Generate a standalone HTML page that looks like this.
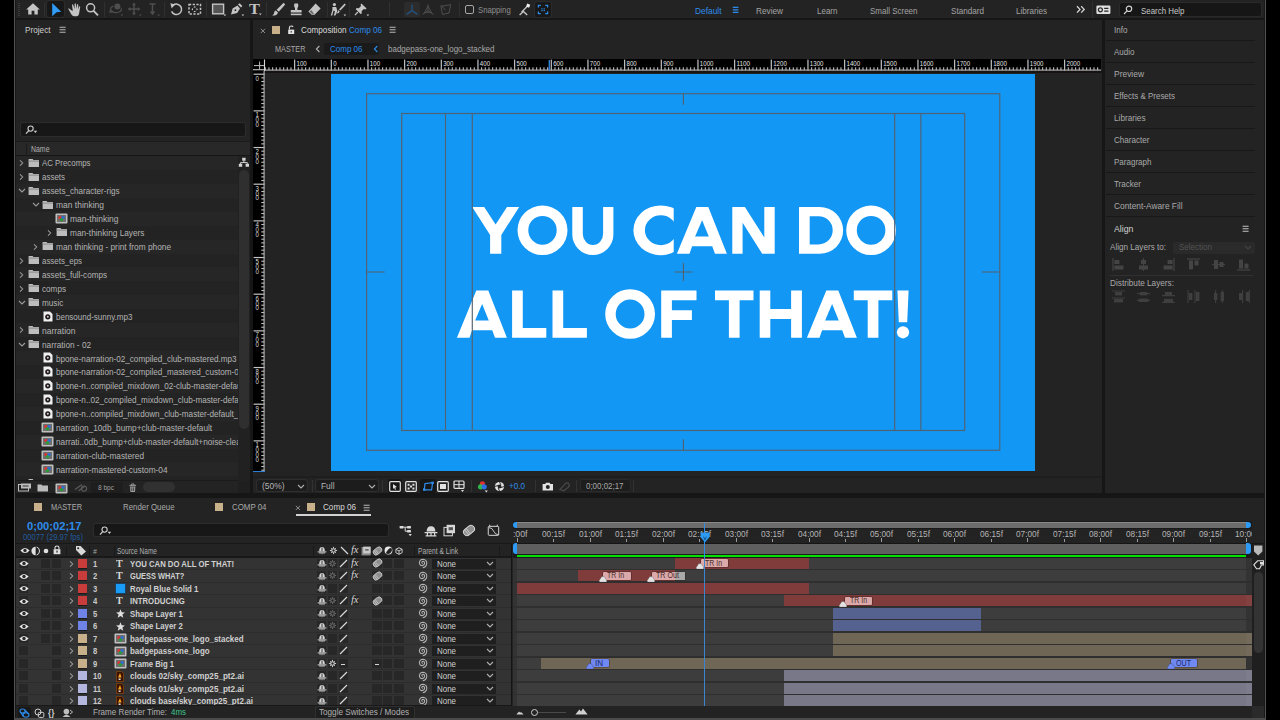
<!DOCTYPE html><html><head><meta charset="utf-8"><title>AE</title><style>html,body{margin:0;padding:0;background:#232323;}body{width:1280px;height:720px;position:relative;overflow:hidden;font-family:"Liberation Sans",sans-serif;}div,span,svg{position:absolute;display:block;}span{white-space:nowrap;}</style></head><body><div style="left:0px;top:0px;width:14px;height:720px;background:#000;"></div>
<div style="left:14px;top:0px;width:1px;height:720px;background:#4b4b4b;"></div>
<div style="left:1265px;top:0px;width:1px;height:720px;background:#4b4b4b;"></div>
<div style="left:1266px;top:0px;width:14px;height:720px;background:#000;"></div>
<div style="left:14px;top:718px;width:1252px;height:2px;background:#4b4b4b;"></div>
<div style="left:15px;top:0px;width:1250px;height:18px;background:#232323;"></div>
<div style="left:15px;top:18px;width:1250px;height:2px;background:#161616;"></div>
<div style="left:44px;top:2px;width:1px;height:15px;background:#303030;"></div>
<div style="left:104px;top:2px;width:1px;height:15px;background:#303030;"></div>
<div style="left:164px;top:2px;width:1px;height:15px;background:#303030;"></div>
<div style="left:206px;top:2px;width:1px;height:15px;background:#303030;"></div>
<div style="left:266px;top:2px;width:1px;height:15px;background:#303030;"></div>
<div style="left:327px;top:2px;width:1px;height:15px;background:#303030;"></div>
<div style="left:349px;top:2px;width:1px;height:15px;background:#303030;"></div>
<div style="left:388.5px;top:2px;width:1px;height:15px;background:#303030;"></div>
<div style="left:459px;top:2px;width:1px;height:15px;background:#303030;"></div>
<div style="left:18px;top:3px;width:2px;height:13px;background:repeating-linear-gradient(#3a3a3a 0 1px,#232323 1px 2px)"></div>
<svg style="left:25px;top:2px;" width="16" height="14" viewBox="0 0 16 14"><path d="M8 1.2 L1.2 7.6 H3.2 V12.6 H6.6 V8.8 H9.4 V12.6 H12.8 V7.6 H14.8 Z" fill="#c4c4c4"/></svg>
<div style="left:47px;top:1px;width:17px;height:16px;background:#181818;border-radius:2px;box-shadow:0 0 0 1px #2c2c2c;"></div>
<svg style="left:51px;top:2px;" width="12" height="15" viewBox="0 0 12 15"><path d="M1.2 1 L10.2 9.8 L5.6 10.2 L1.2 14.2 Z" fill="#2f9bf4"/></svg>
<svg style="left:67px;top:2px;" width="15" height="15" viewBox="0 0 15 15"><path d="M4 8 L2.2 6.4 Q1 5.6 1.6 7.4 L4.4 12.6 Q5.4 14.2 7.4 14.2 H9.4 Q11.6 14.2 12 12 L13.2 5 Q13.2 3.8 12.2 4.4 L11.4 7.4 L11.2 2.6 Q10.6 1.4 10 2.6 L9.6 7 L8.8 1.8 Q8.2 0.6 7.6 1.8 L7.6 7 L6.2 2.8 Q5.4 1.8 5 3 L5.8 9 Z" fill="#c4c4c4"/></svg>
<svg style="left:85px;top:2px;" width="15" height="15" viewBox="0 0 15 15"><circle cx="5.6" cy="5.8" r="4" fill="none" stroke="#c4c4c4" stroke-width="1.5"/><path d="M8.6 8.8 L13 13.4" stroke="#c4c4c4" stroke-width="1.9"/></svg>
<svg style="left:108px;top:2px;" width="16" height="15" viewBox="0 0 16 15"><circle cx="9.4" cy="4.6" r="3" fill="#4e4e4e"/><path d="M5.4 4.2 Q1.4 5.6 3.2 8.6 Q6 11.6 11 10 Q14.4 8.6 13 6.4" fill="none" stroke="#4e4e4e" stroke-width="1.3"/><path d="M2 7 L4.6 10.6 L1.2 10.8 Z" fill="#4e4e4e"/><path d="M12.6 12.4 l2.6 0 l-1.3 1.8z" fill="#4e4e4e"/></svg>
<svg style="left:128px;top:2px;" width="14" height="15" viewBox="0 0 14 15"><path d="M6 2.4 V11.6 M1.4 7 H10.6" stroke="#4e4e4e" stroke-width="1.5" fill="none"/><path d="M6 0.6 L8 3.2 H4 Z M6 13.4 L8 10.8 H4 Z M-0.4 7 L2.2 5 V9 Z M12.4 7 L9.8 5 V9 Z" fill="#4e4e4e"/><path d="M11 12.4 l2.6 0 l-1.3 1.8z" fill="#4e4e4e"/></svg>
<svg style="left:147px;top:2px;" width="14" height="15" viewBox="0 0 14 15"><path d="M5.5 2 V10.6 M2.4 2 H8.6" stroke="#4e4e4e" stroke-width="1.5" fill="none"/><path d="M5.5 13.2 L8.4 9.4 H2.6 Z" fill="#4e4e4e"/><path d="M10.4 12.4 l2.6 0 l-1.3 1.8z" fill="#4e4e4e"/></svg>
<svg style="left:169px;top:2px;" width="15" height="15" viewBox="0 0 15 15"><path d="M4.2 3.2 A5.2 5.2 0 1 1 2.6 9.4" fill="none" stroke="#c4c4c4" stroke-width="1.5"/><path d="M1.4 1.2 L6.4 2.6 L2.6 6.2 Z" fill="#c4c4c4"/></svg>
<svg style="left:187px;top:2px;" width="16" height="15" viewBox="0 0 16 15"><rect x="2" y="2.5" width="11.5" height="9.5" fill="none" stroke="#c4c4c4" stroke-width="1.5" stroke-dasharray="2.2 1.5"/><path d="M7.7 4 L9 5.6 H6.4 Z M7.7 10.6 L9 9 H6.4 Z M4.4 7.3 L6 6 V8.6 Z M11 7.3 L9.4 6 V8.6 Z" fill="#c4c4c4"/></svg>
<svg style="left:211px;top:2px;" width="16" height="15" viewBox="0 0 16 15"><rect x="1.6" y="2.2" width="11" height="9.6" fill="#555" stroke="#c4c4c4" stroke-width="1.4"/><path d="M12.6 12.4 l2.6 0 l-1.3 1.8z" fill="#c4c4c4"/></svg>
<svg style="left:229px;top:2px;" width="16" height="15" viewBox="0 0 16 15"><path d="M2 12.6 L3.6 6.4 L8.4 3.6 L11 6.4 L8.2 11 Z" fill="#c4c4c4"/><path d="M9 2.6 L10.6 1.2 L13.4 4 L12 5.6 Z" fill="#c4c4c4"/><circle cx="6.4" cy="8.2" r="0.9" fill="#232323"/><path d="M12.6 12.4 l2.6 0 l-1.3 1.8z" fill="#c4c4c4"/></svg>
<span style="left:248.50px;top:3.15px;font-size:14px;line-height:14px;color:#c4c4c4;transform:scaleX(1.1693);transform-origin:left top;font-family:'Liberation Serif',serif;font-weight:bold;opacity:.99;">T</span>
<svg style="left:259px;top:13px;" width="4" height="3" viewBox="0 0 4 3"><path d="M0 0.4 l2.6 0 l-1.3 1.8z" fill="#c4c4c4"/></svg>
<svg style="left:271px;top:2px;" width="15" height="15" viewBox="0 0 15 15"><path d="M12.6 0.8 L14.2 2.4 L7.8 9.8 L5.6 7.8 Z" fill="#c4c4c4"/><path d="M4.8 8.4 L7 10.4 Q6 13.8 1.2 13.6 Q3.4 12.2 3.2 10.2 Q3.6 8.6 4.8 8.4Z" fill="#c4c4c4"/></svg>
<svg style="left:289px;top:2px;" width="15" height="15" viewBox="0 0 15 15"><path d="M5.4 1.4 H9 Q10 4 8.4 6.2 V8 H12.6 V10.4 H1.8 V8 H6 V6.2 Q4.4 4 5.4 1.4Z" fill="#c4c4c4"/><rect x="1.8" y="11.6" width="10.8" height="1.6" fill="#c4c4c4"/></svg>
<svg style="left:307px;top:2px;" width="15" height="15" viewBox="0 0 15 15"><path d="M8.6 1.6 L13.6 6.6 L7.6 12.8 H4.6 L1.4 9.4 Z" fill="#c4c4c4"/><path d="M2.6 9.6 L5 12 H7 L4.4 8 Z" fill="#232323" opacity=".55"/></svg>
<svg style="left:330px;top:2px;" width="17" height="15" viewBox="0 0 17 15"><circle cx="4.4" cy="2.6" r="1.6" fill="#c4c4c4"/><path d="M2.4 5 H6.2 L7.4 9 L5.4 13.6 H3.8 L5 9.4 L3.6 8.6 L2.2 13.6 H0.8 L2.4 8 Z" fill="#c4c4c4"/><path d="M14.6 1.6 L15.8 2.8 L10.4 8.6 L9 7.4 Z" fill="#c4c4c4"/><path d="M8.4 8 L9.8 9.4 Q9 11.6 6.4 11.4 Q8 10.4 8.4 8Z" fill="#c4c4c4"/><path d="M13.6 12.4 l2.6 0 l-1.3 1.8z" fill="#c4c4c4"/></svg>
<svg style="left:354px;top:2px;" width="16" height="15" viewBox="0 0 16 15"><path d="M7.4 1.4 L12.6 6.6 L11.2 7.4 L9.8 7 L7.6 9.2 L7.8 11.4 L6.6 12 L1.8 7.2 L2.6 6 L4.8 6.2 L7 4 L6.6 2.6 Z" fill="#c4c4c4"/><path d="M3.8 10 L1 13.2" stroke="#c4c4c4" stroke-width="1.2"/><path d="M12.6 12.4 l2.6 0 l-1.3 1.8z" fill="#c4c4c4"/></svg>
<div style="left:404px;top:2px;width:16px;height:15px;background:#2c2c2c;border-radius:2px;"></div>
<svg style="left:405px;top:3px;" width="14" height="13" viewBox="0 0 14 13"><path d="M7 1.4 V7.6 L1.6 11.4 M7 7.6 L12.4 11.4" stroke="#23527e" stroke-width="1.3" fill="none"/></svg>
<svg style="left:421px;top:3px;" width="14" height="13" viewBox="0 0 14 13"><path d="M7 1.4 V7.6 L1.6 11.4 M7 7.6 L12.4 11.4" stroke="#4e4e4e" stroke-width="1.1" fill="none"/><path d="M7 3 L3.4 9.6 H10.6 Z" stroke="#4e4e4e" stroke-width=".9" fill="none"/></svg>
<svg style="left:439px;top:3px;" width="14" height="13" viewBox="0 0 14 13"><path d="M2 3.4 L11.6 1.6 L10 10 L3.4 11.4 Z" stroke="#4e4e4e" stroke-width="1" fill="none"/><path d="M1.6 1.8 L6.6 7.2" stroke="#4e4e4e" stroke-width="1"/></svg>
<div style="left:465.2px;top:5px;width:7.2px;height:7.4px;border:1.6px solid #a6a6a6;border-radius:2px"></div>
<span style="left:478.30px;top:6.38px;font-size:9px;line-height:9px;color:#8e8e8e;transform:scaleX(0.8597);transform-origin:left top;">Snapping</span>
<svg style="left:518px;top:3px;" width="14" height="13" viewBox="0 0 14 13"><path d="M3.6 9 L9.6 3" stroke="#c4c4c4" stroke-width="1.3"/><rect x="8.6" y="1" width="3.2" height="3.2" fill="#f0f0f0" transform="rotate(20 10 2.6)"/><path d="M1.6 12 L5.4 8.4 L9.2 12" stroke="#c4c4c4" stroke-width="1.4" fill="none"/></svg>
<div style="left:535px;top:2px;width:15.5px;height:15px;background:#181818;border-radius:2px;box-shadow:0 0 0 1px #2b2b2b;"></div>
<svg style="left:536px;top:3px;" width="14" height="13" viewBox="0 0 14 13"><path d="M2.4 4.6 V2.4 H4.8 M9.2 2.4 H11.6 V4.6 M11.6 8.4 V10.6 H9.2 M4.8 10.6 H2.4 V8.4" stroke="#2f8be8" stroke-width="1.3" fill="none"/><path d="M5.4 5.2 h1.2 v1.2 h-1.2z M7.6 5.2 h1.2 v1.2 h-1.2z M5.4 7 h1.2 v1.2 h-1.2z M7.6 7 h1.2 v1.2 h-1.2z" fill="#2f8be8"/></svg>
<span style="left:695.00px;top:6.58px;font-size:9px;line-height:9px;color:#2d8ceb;transform:scaleX(0.9293);transform-origin:left top;">Default</span>
<svg style="left:732px;top:5.7px;" width="8" height="8" viewBox="0 0 8 8"><path d="M0.8 1.4 H6.4 M0.8 3.9 H6.4 M0.8 6.4 H6.4" stroke="#2d8ceb" stroke-width="1.2"/></svg>
<span style="left:755.50px;top:6.58px;font-size:9px;line-height:9px;color:#a3a3a3;transform:scaleX(0.9149);transform-origin:left top;">Review</span>
<span style="left:816.50px;top:6.58px;font-size:9px;line-height:9px;color:#a3a3a3;transform:scaleX(0.8905);transform-origin:left top;">Learn</span>
<span style="left:869.50px;top:6.58px;font-size:9px;line-height:9px;color:#a3a3a3;transform:scaleX(0.8875);transform-origin:left top;">Small Screen</span>
<span style="left:950.50px;top:6.58px;font-size:9px;line-height:9px;color:#a3a3a3;transform:scaleX(0.9034);transform-origin:left top;">Standard</span>
<span style="left:1016.00px;top:6.58px;font-size:9px;line-height:9px;color:#a3a3a3;transform:scaleX(0.8981);transform-origin:left top;">Libraries</span>
<svg style="left:1076px;top:5px;" width="10" height="9" viewBox="0 0 10 9"><path d="M1 1.2 L4 4.4 L1 7.6 M5.2 1.2 L8.2 4.4 L5.2 7.6" stroke="#d8d8d8" stroke-width="1.3" fill="none"/></svg>
<div style="left:1092px;top:1px;width:1px;height:17px;background:#303030;"></div>
<svg style="left:1096px;top:5px;" width="15" height="10" viewBox="0 0 15 10"><rect x="0.4" y="0.6" width="14" height="8.4" rx="1.2" fill="#e0e0e0"/><circle cx="4.4" cy="4.8" r="2" fill="none" stroke="#232323" stroke-width="1.2"/><path d="M8.2 3.4 H12.4 M8.2 6.2 H12.4" stroke="#232323" stroke-width="1.3"/></svg>
<div style="left:1120px;top:3px;width:141px;height:13px;background:#161616;border-radius:2px;box-shadow:0 0 0 1px #2a2a2a"></div>
<svg style="left:1123px;top:5px;" width="10" height="10" viewBox="0 0 10 10"><circle cx="6" cy="3.8" r="2.7" fill="none" stroke="#cfcfcf" stroke-width="1.2"/><path d="M4 5.9 L1 9" stroke="#cfcfcf" stroke-width="1.3"/></svg>
<span style="left:1140.50px;top:6.78px;font-size:9px;line-height:9px;color:#c8c8c8;transform:scaleX(0.8783);transform-origin:left top;">Search Help</span>
<div style="left:15px;top:20px;width:235px;height:473px;background:#232323;"></div>
<div style="left:250px;top:20px;width:3px;height:475px;background:#161616;"></div>
<div style="left:15px;top:493px;width:1250px;height:4.5px;background:#161616;"></div>
<span style="left:25.00px;top:26.18px;font-size:9px;line-height:9px;color:#cfcfcf;transform:scaleX(0.9103);transform-origin:left top;">Project</span>
<svg style="left:59px;top:26.2px;" width="8" height="8" viewBox="0 0 8 8"><path d="M0.6 1.2 H6.6 M0.6 3.7 H6.6 M0.6 6.2 H6.6" stroke="#b8b8b8" stroke-width="1.1"/></svg>
<div style="left:20.5px;top:122.5px;width:224.5px;height:13px;background:#171717;border-radius:2px;box-shadow:0 0 0 1px #2c2c2c"></div>
<svg style="left:25px;top:124.5px;" width="13" height="10" viewBox="0 0 13 10"><circle cx="5.6" cy="3.6" r="2.6" fill="none" stroke="#cfcfcf" stroke-width="1.1"/><path d="M3.8 5.6 L1 8.6" stroke="#cfcfcf" stroke-width="1.3"/><path d="M8.6 5.8 l3.6 0 l-1.8 2.2z" fill="#cfcfcf"/></svg>
<div style="left:15px;top:141px;width:235px;height:1px;background:#1b1b1b;"></div>
<div style="left:15px;top:142px;width:235px;height:12.6px;background:#282828;"></div>
<div style="left:15px;top:154.6px;width:235px;height:1.4px;background:#161616;"></div>
<div style="left:26.3px;top:143.5px;width:1px;height:10px;background:#1a1a1a;"></div>
<span style="left:31.00px;top:145.40px;font-size:8.5px;line-height:8.5px;color:#b0b0b0;transform:scaleX(0.8159);transform-origin:left top;">Name</span>
<div style="left:15px;top:156px;width:223px;height:324.5px;overflow:hidden">
<div style="left:0px;top:0.0px;width:223px;height:14.03px;background:#262626;"></div>
<svg style="left:4px;top:3.2px;" width="5" height="8" viewBox="0 0 5 8"><path d="M1 1.3 L3.7 4 L1 6.7" stroke="#9a9a9a" stroke-width="1.05" fill="none"/></svg>
<svg style="left:13px;top:1.8px;" width="12" height="10" viewBox="0 0 12 10"><path d="M0.6 1 H4.6 L5.4 2 H11 V9 H0.6 Z" fill="#bdbdbd"/><rect x="0.6" y="2.6" width="10.4" height="1" fill="#8a8a8a"/></svg>
<span style="left:27.00px;top:3.48px;font-size:9px;line-height:9px;color:#b4b4b4;transform:scaleX(0.8736);transform-origin:left top;">AC Precomps</span>
<div style="left:0px;top:13.93px;width:223px;height:14.03px;background:#232323;"></div>
<svg style="left:4px;top:17.13px;" width="5" height="8" viewBox="0 0 5 8"><path d="M1 1.3 L3.7 4 L1 6.7" stroke="#9a9a9a" stroke-width="1.05" fill="none"/></svg>
<svg style="left:13px;top:15.73px;" width="12" height="10" viewBox="0 0 12 10"><path d="M0.6 1 H4.6 L5.4 2 H11 V9 H0.6 Z" fill="#bdbdbd"/><rect x="0.6" y="2.6" width="10.4" height="1" fill="#8a8a8a"/></svg>
<span style="left:27.00px;top:17.41px;font-size:9px;line-height:9px;color:#b4b4b4;transform:scaleX(0.8842);transform-origin:left top;">assets</span>
<div style="left:0px;top:27.86px;width:223px;height:14.03px;background:#262626;"></div>
<svg style="left:2.5px;top:32.46px;" width="8" height="5" viewBox="0 0 8 5"><path d="M1 1 L4 4 L7 1" stroke="#9a9a9a" stroke-width="1.1" fill="none"/></svg>
<svg style="left:13px;top:29.66px;" width="12" height="10" viewBox="0 0 12 10"><path d="M0.6 1 H4.6 L5.4 2 H11 V9 H0.6 Z" fill="#bdbdbd"/><rect x="0.6" y="2.6" width="10.4" height="1" fill="#8a8a8a"/></svg>
<span style="left:27.00px;top:31.34px;font-size:9px;line-height:9px;color:#b4b4b4;transform:scaleX(0.9008);transform-origin:left top;">assets_character-rigs</span>
<div style="left:0px;top:41.79px;width:223px;height:14.03px;background:#232323;"></div>
<svg style="left:16.5px;top:46.39px;" width="8" height="5" viewBox="0 0 8 5"><path d="M1 1 L4 4 L7 1" stroke="#9a9a9a" stroke-width="1.1" fill="none"/></svg>
<svg style="left:27px;top:43.589999999999996px;" width="12" height="10" viewBox="0 0 12 10"><path d="M0.6 1 H4.6 L5.4 2 H11 V9 H0.6 Z" fill="#bdbdbd"/><rect x="0.6" y="2.6" width="10.4" height="1" fill="#8a8a8a"/></svg>
<span style="left:41.00px;top:45.27px;font-size:9px;line-height:9px;color:#b4b4b4;transform:scaleX(0.9406);transform-origin:left top;">man thinking</span>
<div style="left:0px;top:55.72px;width:223px;height:14.03px;background:#262626;"></div>
<svg style="left:39.5px;top:57.12px;" width="13" height="11" viewBox="0 0 13 11"><rect x="0.5" y="0.5" width="12" height="10" rx="1" fill="#bfbfbf"/><rect x="2" y="2" width="9" height="7" fill="#6f6f6f"/><circle cx="5" cy="4.6" r="1.7" fill="#d33"/><circle cx="8" cy="4.6" r="1.7" fill="#2b6fd6"/><circle cx="6.4" cy="6.8" r="1.7" fill="#2a9b3a"/></svg>
<span style="left:55.00px;top:59.20px;font-size:9px;line-height:9px;color:#b4b4b4;transform:scaleX(0.9412);transform-origin:left top;">man-thinking</span>
<div style="left:0px;top:69.65px;width:223px;height:14.03px;background:#232323;"></div>
<svg style="left:32px;top:72.85000000000001px;" width="5" height="8" viewBox="0 0 5 8"><path d="M1 1.3 L3.7 4 L1 6.7" stroke="#9a9a9a" stroke-width="1.05" fill="none"/></svg>
<svg style="left:41px;top:71.45px;" width="12" height="10" viewBox="0 0 12 10"><path d="M0.6 1 H4.6 L5.4 2 H11 V9 H0.6 Z" fill="#bdbdbd"/><rect x="0.6" y="2.6" width="10.4" height="1" fill="#8a8a8a"/></svg>
<span style="left:55.00px;top:73.13px;font-size:9px;line-height:9px;color:#b4b4b4;transform:scaleX(0.9193);transform-origin:left top;">man-thinking Layers</span>
<div style="left:0px;top:83.58px;width:223px;height:14.03px;background:#262626;"></div>
<svg style="left:18px;top:86.78px;" width="5" height="8" viewBox="0 0 5 8"><path d="M1 1.3 L3.7 4 L1 6.7" stroke="#9a9a9a" stroke-width="1.05" fill="none"/></svg>
<svg style="left:27px;top:85.38px;" width="12" height="10" viewBox="0 0 12 10"><path d="M0.6 1 H4.6 L5.4 2 H11 V9 H0.6 Z" fill="#bdbdbd"/><rect x="0.6" y="2.6" width="10.4" height="1" fill="#8a8a8a"/></svg>
<span style="left:41.00px;top:87.06px;font-size:9px;line-height:9px;color:#b4b4b4;transform:scaleX(0.9232);transform-origin:left top;">man thinking - print from phone</span>
<div style="left:0px;top:97.51px;width:223px;height:14.03px;background:#232323;"></div>
<svg style="left:4px;top:100.71px;" width="5" height="8" viewBox="0 0 5 8"><path d="M1 1.3 L3.7 4 L1 6.7" stroke="#9a9a9a" stroke-width="1.05" fill="none"/></svg>
<svg style="left:13px;top:99.30999999999999px;" width="12" height="10" viewBox="0 0 12 10"><path d="M0.6 1 H4.6 L5.4 2 H11 V9 H0.6 Z" fill="#bdbdbd"/><rect x="0.6" y="2.6" width="10.4" height="1" fill="#8a8a8a"/></svg>
<span style="left:27.00px;top:100.99px;font-size:9px;line-height:9px;color:#b4b4b4;transform:scaleX(0.8786);transform-origin:left top;">assets_eps</span>
<div style="left:0px;top:111.44px;width:223px;height:14.03px;background:#262626;"></div>
<svg style="left:4px;top:114.64px;" width="5" height="8" viewBox="0 0 5 8"><path d="M1 1.3 L3.7 4 L1 6.7" stroke="#9a9a9a" stroke-width="1.05" fill="none"/></svg>
<svg style="left:13px;top:113.24px;" width="12" height="10" viewBox="0 0 12 10"><path d="M0.6 1 H4.6 L5.4 2 H11 V9 H0.6 Z" fill="#bdbdbd"/><rect x="0.6" y="2.6" width="10.4" height="1" fill="#8a8a8a"/></svg>
<span style="left:27.00px;top:114.92px;font-size:9px;line-height:9px;color:#b4b4b4;transform:scaleX(0.9024);transform-origin:left top;">assets_full-comps</span>
<div style="left:0px;top:125.37px;width:223px;height:14.03px;background:#232323;"></div>
<svg style="left:4px;top:128.57px;" width="5" height="8" viewBox="0 0 5 8"><path d="M1 1.3 L3.7 4 L1 6.7" stroke="#9a9a9a" stroke-width="1.05" fill="none"/></svg>
<svg style="left:13px;top:127.17px;" width="12" height="10" viewBox="0 0 12 10"><path d="M0.6 1 H4.6 L5.4 2 H11 V9 H0.6 Z" fill="#bdbdbd"/><rect x="0.6" y="2.6" width="10.4" height="1" fill="#8a8a8a"/></svg>
<span style="left:27.00px;top:128.85px;font-size:9px;line-height:9px;color:#b4b4b4;transform:scaleX(0.9054);transform-origin:left top;">comps</span>
<div style="left:0px;top:139.3px;width:223px;height:14.03px;background:#262626;"></div>
<svg style="left:2.5px;top:143.9px;" width="8" height="5" viewBox="0 0 8 5"><path d="M1 1 L4 4 L7 1" stroke="#9a9a9a" stroke-width="1.1" fill="none"/></svg>
<svg style="left:13px;top:141.10000000000002px;" width="12" height="10" viewBox="0 0 12 10"><path d="M0.6 1 H4.6 L5.4 2 H11 V9 H0.6 Z" fill="#bdbdbd"/><rect x="0.6" y="2.6" width="10.4" height="1" fill="#8a8a8a"/></svg>
<span style="left:27.00px;top:142.78px;font-size:9px;line-height:9px;color:#b4b4b4;transform:scaleX(0.9063);transform-origin:left top;">music</span>
<div style="left:0px;top:153.23px;width:223px;height:14.03px;background:#232323;"></div>
<svg style="left:28px;top:154.63px;" width="10" height="11" viewBox="0 0 10 11"><path d="M0.5 0.5 H7 L9.5 3 V10.5 H0.5 Z" fill="#f0f0f0"/><circle cx="4.8" cy="5.8" r="2.6" fill="#1b1b1b"/><circle cx="4.8" cy="5.8" r="1" fill="#e8c9c9"/></svg>
<span style="left:41.00px;top:156.71px;font-size:9px;line-height:9px;color:#b4b4b4;transform:scaleX(0.8895);transform-origin:left top;">bensound-sunny.mp3</span>
<div style="left:0px;top:167.16px;width:223px;height:14.03px;background:#262626;"></div>
<svg style="left:4px;top:170.35999999999999px;" width="5" height="8" viewBox="0 0 5 8"><path d="M1 1.3 L3.7 4 L1 6.7" stroke="#9a9a9a" stroke-width="1.05" fill="none"/></svg>
<svg style="left:13px;top:168.96px;" width="12" height="10" viewBox="0 0 12 10"><path d="M0.6 1 H4.6 L5.4 2 H11 V9 H0.6 Z" fill="#bdbdbd"/><rect x="0.6" y="2.6" width="10.4" height="1" fill="#8a8a8a"/></svg>
<span style="left:27.00px;top:170.64px;font-size:9px;line-height:9px;color:#b4b4b4;transform:scaleX(0.9431);transform-origin:left top;">narration</span>
<div style="left:0px;top:181.09px;width:223px;height:14.03px;background:#232323;"></div>
<svg style="left:2.5px;top:185.69px;" width="8" height="5" viewBox="0 0 8 5"><path d="M1 1 L4 4 L7 1" stroke="#9a9a9a" stroke-width="1.1" fill="none"/></svg>
<svg style="left:13px;top:182.89000000000001px;" width="12" height="10" viewBox="0 0 12 10"><path d="M0.6 1 H4.6 L5.4 2 H11 V9 H0.6 Z" fill="#bdbdbd"/><rect x="0.6" y="2.6" width="10.4" height="1" fill="#8a8a8a"/></svg>
<span style="left:27.00px;top:184.57px;font-size:9px;line-height:9px;color:#b4b4b4;transform:scaleX(0.9172);transform-origin:left top;">narration - 02</span>
<div style="left:0px;top:195.02px;width:223px;height:14.03px;background:#262626;"></div>
<svg style="left:28px;top:196.42px;" width="10" height="11" viewBox="0 0 10 11"><path d="M0.5 0.5 H7 L9.5 3 V10.5 H0.5 Z" fill="#f0f0f0"/><circle cx="4.8" cy="5.8" r="2.6" fill="#1b1b1b"/><circle cx="4.8" cy="5.8" r="1" fill="#e8c9c9"/></svg>
<span style="left:41.00px;top:198.50px;font-size:9px;line-height:9px;color:#b4b4b4;transform:scaleX(0.9047);transform-origin:left top;">bpone-narration-02_compiled_club-mastered.mp3</span>
<div style="left:0px;top:208.95px;width:223px;height:14.03px;background:#232323;"></div>
<svg style="left:28px;top:210.35px;" width="10" height="11" viewBox="0 0 10 11"><path d="M0.5 0.5 H7 L9.5 3 V10.5 H0.5 Z" fill="#f0f0f0"/><circle cx="4.8" cy="5.8" r="2.6" fill="#1b1b1b"/><circle cx="4.8" cy="5.8" r="1" fill="#e8c9c9"/></svg>
<span style="left:41.00px;top:212.43px;font-size:9px;line-height:9px;color:#b4b4b4;transform:scaleX(0.9047);transform-origin:left top;">bpone-narration-02_compiled_mastered_custom-0</span>
<div style="left:0px;top:222.88px;width:223px;height:14.03px;background:#262626;"></div>
<svg style="left:28px;top:224.28px;" width="10" height="11" viewBox="0 0 10 11"><path d="M0.5 0.5 H7 L9.5 3 V10.5 H0.5 Z" fill="#f0f0f0"/><circle cx="4.8" cy="5.8" r="2.6" fill="#1b1b1b"/><circle cx="4.8" cy="5.8" r="1" fill="#e8c9c9"/></svg>
<span style="left:41.00px;top:226.36px;font-size:9px;line-height:9px;color:#b4b4b4;transform:scaleX(0.9047);transform-origin:left top;">bpone-n..compiled_mixdown_02-club-master-default</span>
<div style="left:0px;top:236.81px;width:223px;height:14.03px;background:#232323;"></div>
<svg style="left:28px;top:238.21px;" width="10" height="11" viewBox="0 0 10 11"><path d="M0.5 0.5 H7 L9.5 3 V10.5 H0.5 Z" fill="#f0f0f0"/><circle cx="4.8" cy="5.8" r="2.6" fill="#1b1b1b"/><circle cx="4.8" cy="5.8" r="1" fill="#e8c9c9"/></svg>
<span style="left:41.00px;top:240.29px;font-size:9px;line-height:9px;color:#b4b4b4;transform:scaleX(0.9047);transform-origin:left top;">bpone-n..02_compiled_mixdown_club-master-default</span>
<div style="left:0px;top:250.74px;width:223px;height:14.03px;background:#262626;"></div>
<svg style="left:28px;top:252.14000000000001px;" width="10" height="11" viewBox="0 0 10 11"><path d="M0.5 0.5 H7 L9.5 3 V10.5 H0.5 Z" fill="#f0f0f0"/><circle cx="4.8" cy="5.8" r="2.6" fill="#1b1b1b"/><circle cx="4.8" cy="5.8" r="1" fill="#e8c9c9"/></svg>
<span style="left:41.00px;top:254.22px;font-size:9px;line-height:9px;color:#b4b4b4;transform:scaleX(0.9047);transform-origin:left top;">bpone-n..compiled_mixdown_club-master-default_</span>
<div style="left:0px;top:264.67px;width:223px;height:14.03px;background:#232323;"></div>
<svg style="left:25.5px;top:266.07px;" width="13" height="11" viewBox="0 0 13 11"><rect x="0.5" y="0.5" width="12" height="10" rx="1" fill="#bfbfbf"/><rect x="2" y="2" width="9" height="7" fill="#6f6f6f"/><circle cx="5" cy="4.6" r="1.7" fill="#d33"/><circle cx="8" cy="4.6" r="1.7" fill="#2b6fd6"/><circle cx="6.4" cy="6.8" r="1.7" fill="#2a9b3a"/></svg>
<span style="left:41.00px;top:268.15px;font-size:9px;line-height:9px;color:#b4b4b4;transform:scaleX(0.9163);transform-origin:left top;">narration_10db_bump+club-master-default</span>
<div style="left:0px;top:278.6px;width:223px;height:14.03px;background:#262626;"></div>
<svg style="left:25.5px;top:280.0px;" width="13" height="11" viewBox="0 0 13 11"><rect x="0.5" y="0.5" width="12" height="10" rx="1" fill="#bfbfbf"/><rect x="2" y="2" width="9" height="7" fill="#6f6f6f"/><circle cx="5" cy="4.6" r="1.7" fill="#d33"/><circle cx="8" cy="4.6" r="1.7" fill="#2b6fd6"/><circle cx="6.4" cy="6.8" r="1.7" fill="#2a9b3a"/></svg>
<span style="left:41.00px;top:282.08px;font-size:9px;line-height:9px;color:#b4b4b4;transform:scaleX(0.9163);transform-origin:left top;">narrati..0db_bump+club-master-default+noise-clea</span>
<div style="left:0px;top:292.53px;width:223px;height:14.03px;background:#232323;"></div>
<svg style="left:25.5px;top:293.92999999999995px;" width="13" height="11" viewBox="0 0 13 11"><rect x="0.5" y="0.5" width="12" height="10" rx="1" fill="#bfbfbf"/><rect x="2" y="2" width="9" height="7" fill="#6f6f6f"/><circle cx="5" cy="4.6" r="1.7" fill="#d33"/><circle cx="8" cy="4.6" r="1.7" fill="#2b6fd6"/><circle cx="6.4" cy="6.8" r="1.7" fill="#2a9b3a"/></svg>
<span style="left:41.00px;top:296.01px;font-size:9px;line-height:9px;color:#b4b4b4;transform:scaleX(0.9210);transform-origin:left top;">narration-club-mastered</span>
<div style="left:0px;top:306.46px;width:223px;height:14.03px;background:#262626;"></div>
<svg style="left:25.5px;top:307.85999999999996px;" width="13" height="11" viewBox="0 0 13 11"><rect x="0.5" y="0.5" width="12" height="10" rx="1" fill="#bfbfbf"/><rect x="2" y="2" width="9" height="7" fill="#6f6f6f"/><circle cx="5" cy="4.6" r="1.7" fill="#d33"/><circle cx="8" cy="4.6" r="1.7" fill="#2b6fd6"/><circle cx="6.4" cy="6.8" r="1.7" fill="#2a9b3a"/></svg>
<span style="left:41.00px;top:309.94px;font-size:9px;line-height:9px;color:#b4b4b4;transform:scaleX(0.9219);transform-origin:left top;">narration-mastered-custom-04</span>
<div style="left:0px;top:320.39px;width:223px;height:14.03px;background:#232323;"></div>
<svg style="left:4px;top:323.59px;" width="5" height="8" viewBox="0 0 5 8"><path d="M1 1.3 L3.7 4 L1 6.7" stroke="#9a9a9a" stroke-width="1.05" fill="none"/></svg>
<svg style="left:13px;top:322.19px;" width="12" height="10" viewBox="0 0 12 10"><path d="M0.6 1 H4.6 L5.4 2 H11 V9 H0.6 Z" fill="#bdbdbd"/><rect x="0.6" y="2.6" width="10.4" height="1" fill="#8a8a8a"/></svg>
</div>
<div style="left:238px;top:156px;width:12px;height:324.5px;background:#212121;"></div>
<div style="left:239px;top:170px;width:9.5px;height:259px;background:#2f2f2f;border-radius:5px"></div>
<svg style="left:237.5px;top:156.5px;" width="12" height="11" viewBox="0 0 12 11"><path d="M4.2 0.8 h3.4 v3 h-3.4z M0.8 6.8 h3.4 v3 h-3.4z M7.6 6.8 h3.4 v3 h-3.4z" fill="#d4d4d4"/><path d="M5.9 3.8 V5.6 M2.5 6.8 V5.6 H9.3 V6.8" stroke="#d4d4d4" stroke-width="1" fill="none"/></svg>
<div style="left:15px;top:480.5px;width:235px;height:12.5px;background:#232323;"></div>
<div style="left:15px;top:480px;width:223px;height:1px;background:#1b1b1b;"></div>
<div style="left:238px;top:480.5px;width:12px;height:12.5px;background:#1f1f1f;"></div>
<svg style="left:18px;top:483px;" width="14" height="9" viewBox="0 0 14 9"><rect x="0.5" y="1.5" width="10" height="6.5" fill="none" stroke="#bdbdbd" stroke-width="1"/><rect x="3" y="0.5" width="10" height="5" fill="#bdbdbd"/><path d="M4.6 3 h6" stroke="#232323" stroke-width=".9"/></svg>
<svg style="left:37px;top:483.5px;" width="12" height="8" viewBox="0 0 12 8"><path d="M0.5 0.5 H4.5 L5.2 1.4 H11 V7.6 H0.5 Z" fill="#bdbdbd"/></svg>
<svg style="left:55px;top:482.6px;" width="13" height="11" viewBox="0 0 13 11"><rect x="0.5" y="0.5" width="12" height="10" rx="1" fill="#bfbfbf"/><rect x="2" y="2" width="9" height="7" fill="#6f6f6f"/><circle cx="5" cy="4.6" r="1.7" fill="#d33"/><circle cx="8" cy="4.6" r="1.7" fill="#2b6fd6"/><circle cx="6.4" cy="6.8" r="1.7" fill="#2a9b3a"/></svg>
<svg style="left:74px;top:483px;" width="15" height="9" viewBox="0 0 15 9"><path d="M1 6.6 L8 1.4 M4.6 7.8 L11 3" stroke="#5a5a5a" stroke-width="1.3"/><circle cx="10" cy="5.6" r="2.6" fill="none" stroke="#5a5a5a" stroke-width="1.1"/></svg>
<div style="left:91px;top:481.5px;width:32px;height:11px;background:#1e1e1e;border-radius:1px;"></div>
<span style="left:98.00px;top:484.33px;font-size:8px;line-height:8px;color:#a0a0a0;transform:scaleX(0.8176);transform-origin:left top;">8 bpc</span>
<svg style="left:128px;top:482.5px;" width="10" height="10" viewBox="0 0 10 10"><path d="M1.4 2.4 H8 M3.4 2.2 V1 H6 V2.2" stroke="#9a9a9a" stroke-width="1" fill="none"/><path d="M2 3.4 H7.4 L7 9 H2.4 Z" fill="#9a9a9a"/><path d="M3.8 4.4 V8 M5.6 4.4 V8" stroke="#232323" stroke-width=".7"/></svg>
<div style="left:143px;top:481.5px;width:32px;height:10.5px;background:#313131;border-radius:5.5px"></div>
<div style="left:253px;top:20px;width:849px;height:473px;background:#232323;"></div>
<div style="left:1102px;top:20px;width:2.5px;height:475px;background:#161616;"></div>
<svg style="left:260px;top:27.5px;" width="6" height="6" viewBox="0 0 6 6"><path d="M0.8 0.8 L5 5 M5 0.8 L0.8 5" stroke="#9a9a9a" stroke-width="0.9"/></svg>
<div style="left:272px;top:26px;width:7.5px;height:7.5px;background:#c8b18a;"></div>
<svg style="left:287px;top:24.5px;" width="9" height="10" viewBox="0 0 9 10"><rect x="1.2" y="4.6" width="6" height="4.4" fill="#e4e4e4"/><path d="M2.4 4.6 V2.8 Q2.4 1 4.4 1 Q5.6 1 6 2" stroke="#e4e4e4" stroke-width="1.1" fill="none"/><rect x="3.7" y="6" width="1" height="1.6" fill="#232323"/></svg>
<span style="left:301.00px;top:26.18px;font-size:9px;line-height:9px;color:#dcdcdc;transform:scaleX(0.9096);transform-origin:left top;">Composition</span>
<span style="left:349.00px;top:26.18px;font-size:9px;line-height:9px;color:#2d8ceb;transform:scaleX(0.9036);transform-origin:left top;">Comp 06</span>
<svg style="left:388.5px;top:26.2px;" width="8" height="8" viewBox="0 0 8 8"><path d="M0.6 1.2 H6.6 M0.6 3.7 H6.6 M0.6 6.2 H6.6" stroke="#b8b8b8" stroke-width="1.1"/></svg>
<span style="left:274.50px;top:44.58px;font-size:9px;line-height:9px;color:#a8a8a8;transform:scaleX(0.8132);transform-origin:left top;">MASTER</span>
<svg style="left:315px;top:44.5px;" width="6" height="8" viewBox="0 0 6 8"><path d="M4.4 1 L1.4 4 L4.4 7" stroke="#b0b0b0" stroke-width="1.1" fill="none"/></svg>
<div style="left:324px;top:42.5px;width:55px;height:12px;background:#1a1a1a;border-radius:2px"></div>
<span style="left:330.00px;top:44.58px;font-size:9px;line-height:9px;color:#2d8ceb;transform:scaleX(0.8899);transform-origin:left top;">Comp 06</span>
<svg style="left:373px;top:44.5px;" width="6" height="8" viewBox="0 0 6 8"><path d="M4.4 1 L1.4 4 L4.4 7" stroke="#2d8ceb" stroke-width="1.1" fill="none"/></svg>
<span style="left:387.50px;top:44.58px;font-size:9px;line-height:9px;color:#a8a8a8;transform:scaleX(0.8868);transform-origin:left top;">badgepass-one_logo_stacked</span>
<svg style="left:253px;top:59px;font-family:'Liberation Sans',sans-serif;" width="848" height="12" viewBox="0 0 848 12"><rect x="0" y="0" width="848" height="12" fill="#000"/><rect x="11.75" y="8.3" width="1.1" height="3" fill="#c2c2c2"/><rect x="15.42" y="8.3" width="1.1" height="3" fill="#c2c2c2"/><rect x="19.08" y="8.3" width="1.1" height="3" fill="#c2c2c2"/><rect x="22.75" y="8.3" width="1.1" height="3" fill="#c2c2c2"/><rect x="26.42" y="8.3" width="1.1" height="3" fill="#c2c2c2"/><rect x="30.08" y="8.3" width="1.1" height="3" fill="#c2c2c2"/><rect x="33.75" y="8.3" width="1.1" height="3" fill="#c2c2c2"/><rect x="37.42" y="8.3" width="1.1" height="3" fill="#c2c2c2"/><rect x="41.03" y="0.6" width="1.2" height="11" fill="#c4c4c4"/><rect x="44.75" y="8.3" width="1.1" height="3" fill="#c2c2c2"/><rect x="48.42" y="8.3" width="1.1" height="3" fill="#c2c2c2"/><rect x="52.08" y="8.3" width="1.1" height="3" fill="#c2c2c2"/><rect x="55.75" y="8.3" width="1.1" height="3" fill="#c2c2c2"/><rect x="59.42" y="8.3" width="1.1" height="3" fill="#c2c2c2"/><rect x="63.08" y="8.3" width="1.1" height="3" fill="#c2c2c2"/><rect x="66.75" y="8.3" width="1.1" height="3" fill="#c2c2c2"/><rect x="70.42" y="8.3" width="1.1" height="3" fill="#c2c2c2"/><rect x="74.08" y="8.3" width="1.1" height="3" fill="#c2c2c2"/><rect x="77.70" y="0.6" width="1.2" height="11" fill="#c4c4c4"/><rect x="81.42" y="8.3" width="1.1" height="3" fill="#c2c2c2"/><rect x="85.08" y="8.3" width="1.1" height="3" fill="#c2c2c2"/><rect x="88.75" y="8.3" width="1.1" height="3" fill="#c2c2c2"/><rect x="92.42" y="8.3" width="1.1" height="3" fill="#c2c2c2"/><rect x="96.08" y="8.3" width="1.1" height="3" fill="#c2c2c2"/><rect x="99.75" y="8.3" width="1.1" height="3" fill="#c2c2c2"/><rect x="103.42" y="8.3" width="1.1" height="3" fill="#c2c2c2"/><rect x="107.08" y="8.3" width="1.1" height="3" fill="#c2c2c2"/><rect x="110.75" y="8.3" width="1.1" height="3" fill="#c2c2c2"/><rect x="114.37" y="0.6" width="1.2" height="11" fill="#c4c4c4"/><rect x="118.08" y="8.3" width="1.1" height="3" fill="#c2c2c2"/><rect x="121.75" y="8.3" width="1.1" height="3" fill="#c2c2c2"/><rect x="125.42" y="8.3" width="1.1" height="3" fill="#c2c2c2"/><rect x="129.08" y="8.3" width="1.1" height="3" fill="#c2c2c2"/><rect x="132.75" y="8.3" width="1.1" height="3" fill="#c2c2c2"/><rect x="136.42" y="8.3" width="1.1" height="3" fill="#c2c2c2"/><rect x="140.08" y="8.3" width="1.1" height="3" fill="#c2c2c2"/><rect x="143.75" y="8.3" width="1.1" height="3" fill="#c2c2c2"/><rect x="147.42" y="8.3" width="1.1" height="3" fill="#c2c2c2"/><rect x="151.03" y="0.6" width="1.2" height="11" fill="#c4c4c4"/><rect x="154.75" y="8.3" width="1.1" height="3" fill="#c2c2c2"/><rect x="158.42" y="8.3" width="1.1" height="3" fill="#c2c2c2"/><rect x="162.08" y="8.3" width="1.1" height="3" fill="#c2c2c2"/><rect x="165.75" y="8.3" width="1.1" height="3" fill="#c2c2c2"/><rect x="169.42" y="8.3" width="1.1" height="3" fill="#c2c2c2"/><rect x="173.08" y="8.3" width="1.1" height="3" fill="#c2c2c2"/><rect x="176.75" y="8.3" width="1.1" height="3" fill="#c2c2c2"/><rect x="180.42" y="8.3" width="1.1" height="3" fill="#c2c2c2"/><rect x="184.08" y="8.3" width="1.1" height="3" fill="#c2c2c2"/><rect x="187.70" y="0.6" width="1.2" height="11" fill="#c4c4c4"/><rect x="191.42" y="8.3" width="1.1" height="3" fill="#c2c2c2"/><rect x="195.08" y="8.3" width="1.1" height="3" fill="#c2c2c2"/><rect x="198.75" y="8.3" width="1.1" height="3" fill="#c2c2c2"/><rect x="202.42" y="8.3" width="1.1" height="3" fill="#c2c2c2"/><rect x="206.08" y="8.3" width="1.1" height="3" fill="#c2c2c2"/><rect x="209.75" y="8.3" width="1.1" height="3" fill="#c2c2c2"/><rect x="213.42" y="8.3" width="1.1" height="3" fill="#c2c2c2"/><rect x="217.08" y="8.3" width="1.1" height="3" fill="#c2c2c2"/><rect x="220.75" y="8.3" width="1.1" height="3" fill="#c2c2c2"/><rect x="224.37" y="0.6" width="1.2" height="11" fill="#c4c4c4"/><rect x="228.08" y="8.3" width="1.1" height="3" fill="#c2c2c2"/><rect x="231.75" y="8.3" width="1.1" height="3" fill="#c2c2c2"/><rect x="235.42" y="8.3" width="1.1" height="3" fill="#c2c2c2"/><rect x="239.08" y="8.3" width="1.1" height="3" fill="#c2c2c2"/><rect x="242.75" y="8.3" width="1.1" height="3" fill="#c2c2c2"/><rect x="246.42" y="8.3" width="1.1" height="3" fill="#c2c2c2"/><rect x="250.08" y="8.3" width="1.1" height="3" fill="#c2c2c2"/><rect x="253.75" y="8.3" width="1.1" height="3" fill="#c2c2c2"/><rect x="257.42" y="8.3" width="1.1" height="3" fill="#c2c2c2"/><rect x="261.03" y="0.6" width="1.2" height="11" fill="#c4c4c4"/><rect x="264.75" y="8.3" width="1.1" height="3" fill="#c2c2c2"/><rect x="268.42" y="8.3" width="1.1" height="3" fill="#c2c2c2"/><rect x="272.08" y="8.3" width="1.1" height="3" fill="#c2c2c2"/><rect x="275.75" y="8.3" width="1.1" height="3" fill="#c2c2c2"/><rect x="279.42" y="8.3" width="1.1" height="3" fill="#c2c2c2"/><rect x="283.08" y="8.3" width="1.1" height="3" fill="#c2c2c2"/><rect x="286.75" y="8.3" width="1.1" height="3" fill="#c2c2c2"/><rect x="290.42" y="8.3" width="1.1" height="3" fill="#c2c2c2"/><rect x="294.08" y="8.3" width="1.1" height="3" fill="#c2c2c2"/><rect x="297.70" y="0.6" width="1.2" height="11" fill="#c4c4c4"/><rect x="301.42" y="8.3" width="1.1" height="3" fill="#c2c2c2"/><rect x="305.08" y="8.3" width="1.1" height="3" fill="#c2c2c2"/><rect x="308.75" y="8.3" width="1.1" height="3" fill="#c2c2c2"/><rect x="312.42" y="8.3" width="1.1" height="3" fill="#c2c2c2"/><rect x="316.08" y="8.3" width="1.1" height="3" fill="#c2c2c2"/><rect x="319.75" y="8.3" width="1.1" height="3" fill="#c2c2c2"/><rect x="323.42" y="8.3" width="1.1" height="3" fill="#c2c2c2"/><rect x="327.08" y="8.3" width="1.1" height="3" fill="#c2c2c2"/><rect x="330.75" y="8.3" width="1.1" height="3" fill="#c2c2c2"/><rect x="334.37" y="0.6" width="1.2" height="11" fill="#c4c4c4"/><rect x="338.08" y="8.3" width="1.1" height="3" fill="#c2c2c2"/><rect x="341.75" y="8.3" width="1.1" height="3" fill="#c2c2c2"/><rect x="345.42" y="8.3" width="1.1" height="3" fill="#c2c2c2"/><rect x="349.08" y="8.3" width="1.1" height="3" fill="#c2c2c2"/><rect x="352.75" y="8.3" width="1.1" height="3" fill="#c2c2c2"/><rect x="356.42" y="8.3" width="1.1" height="3" fill="#c2c2c2"/><rect x="360.08" y="8.3" width="1.1" height="3" fill="#c2c2c2"/><rect x="363.75" y="8.3" width="1.1" height="3" fill="#c2c2c2"/><rect x="367.42" y="8.3" width="1.1" height="3" fill="#c2c2c2"/><rect x="371.03" y="0.6" width="1.2" height="11" fill="#c4c4c4"/><rect x="374.75" y="8.3" width="1.1" height="3" fill="#c2c2c2"/><rect x="378.42" y="8.3" width="1.1" height="3" fill="#c2c2c2"/><rect x="382.08" y="8.3" width="1.1" height="3" fill="#c2c2c2"/><rect x="385.75" y="8.3" width="1.1" height="3" fill="#c2c2c2"/><rect x="389.42" y="8.3" width="1.1" height="3" fill="#c2c2c2"/><rect x="393.08" y="8.3" width="1.1" height="3" fill="#c2c2c2"/><rect x="396.75" y="8.3" width="1.1" height="3" fill="#c2c2c2"/><rect x="400.42" y="8.3" width="1.1" height="3" fill="#c2c2c2"/><rect x="404.08" y="8.3" width="1.1" height="3" fill="#c2c2c2"/><rect x="407.70" y="0.6" width="1.2" height="11" fill="#c4c4c4"/><rect x="411.42" y="8.3" width="1.1" height="3" fill="#c2c2c2"/><rect x="415.08" y="8.3" width="1.1" height="3" fill="#c2c2c2"/><rect x="418.75" y="8.3" width="1.1" height="3" fill="#c2c2c2"/><rect x="422.42" y="8.3" width="1.1" height="3" fill="#c2c2c2"/><rect x="426.08" y="8.3" width="1.1" height="3" fill="#c2c2c2"/><rect x="429.75" y="8.3" width="1.1" height="3" fill="#c2c2c2"/><rect x="433.42" y="8.3" width="1.1" height="3" fill="#c2c2c2"/><rect x="437.08" y="8.3" width="1.1" height="3" fill="#c2c2c2"/><rect x="440.75" y="8.3" width="1.1" height="3" fill="#c2c2c2"/><rect x="444.37" y="0.6" width="1.2" height="11" fill="#c4c4c4"/><rect x="448.08" y="8.3" width="1.1" height="3" fill="#c2c2c2"/><rect x="451.75" y="8.3" width="1.1" height="3" fill="#c2c2c2"/><rect x="455.42" y="8.3" width="1.1" height="3" fill="#c2c2c2"/><rect x="459.08" y="8.3" width="1.1" height="3" fill="#c2c2c2"/><rect x="462.75" y="8.3" width="1.1" height="3" fill="#c2c2c2"/><rect x="466.42" y="8.3" width="1.1" height="3" fill="#c2c2c2"/><rect x="470.08" y="8.3" width="1.1" height="3" fill="#c2c2c2"/><rect x="473.75" y="8.3" width="1.1" height="3" fill="#c2c2c2"/><rect x="477.42" y="8.3" width="1.1" height="3" fill="#c2c2c2"/><rect x="481.03" y="0.6" width="1.2" height="11" fill="#c4c4c4"/><rect x="484.75" y="8.3" width="1.1" height="3" fill="#c2c2c2"/><rect x="488.42" y="8.3" width="1.1" height="3" fill="#c2c2c2"/><rect x="492.08" y="8.3" width="1.1" height="3" fill="#c2c2c2"/><rect x="495.75" y="8.3" width="1.1" height="3" fill="#c2c2c2"/><rect x="499.42" y="8.3" width="1.1" height="3" fill="#c2c2c2"/><rect x="503.08" y="8.3" width="1.1" height="3" fill="#c2c2c2"/><rect x="506.75" y="8.3" width="1.1" height="3" fill="#c2c2c2"/><rect x="510.42" y="8.3" width="1.1" height="3" fill="#c2c2c2"/><rect x="514.08" y="8.3" width="1.1" height="3" fill="#c2c2c2"/><rect x="517.70" y="0.6" width="1.2" height="11" fill="#c4c4c4"/><rect x="521.42" y="8.3" width="1.1" height="3" fill="#c2c2c2"/><rect x="525.08" y="8.3" width="1.1" height="3" fill="#c2c2c2"/><rect x="528.75" y="8.3" width="1.1" height="3" fill="#c2c2c2"/><rect x="532.42" y="8.3" width="1.1" height="3" fill="#c2c2c2"/><rect x="536.08" y="8.3" width="1.1" height="3" fill="#c2c2c2"/><rect x="539.75" y="8.3" width="1.1" height="3" fill="#c2c2c2"/><rect x="543.42" y="8.3" width="1.1" height="3" fill="#c2c2c2"/><rect x="547.08" y="8.3" width="1.1" height="3" fill="#c2c2c2"/><rect x="550.75" y="8.3" width="1.1" height="3" fill="#c2c2c2"/><rect x="554.37" y="0.6" width="1.2" height="11" fill="#c4c4c4"/><rect x="558.08" y="8.3" width="1.1" height="3" fill="#c2c2c2"/><rect x="561.75" y="8.3" width="1.1" height="3" fill="#c2c2c2"/><rect x="565.42" y="8.3" width="1.1" height="3" fill="#c2c2c2"/><rect x="569.08" y="8.3" width="1.1" height="3" fill="#c2c2c2"/><rect x="572.75" y="8.3" width="1.1" height="3" fill="#c2c2c2"/><rect x="576.42" y="8.3" width="1.1" height="3" fill="#c2c2c2"/><rect x="580.08" y="8.3" width="1.1" height="3" fill="#c2c2c2"/><rect x="583.75" y="8.3" width="1.1" height="3" fill="#c2c2c2"/><rect x="587.42" y="8.3" width="1.1" height="3" fill="#c2c2c2"/><rect x="591.03" y="0.6" width="1.2" height="11" fill="#c4c4c4"/><rect x="594.75" y="8.3" width="1.1" height="3" fill="#c2c2c2"/><rect x="598.42" y="8.3" width="1.1" height="3" fill="#c2c2c2"/><rect x="602.08" y="8.3" width="1.1" height="3" fill="#c2c2c2"/><rect x="605.75" y="8.3" width="1.1" height="3" fill="#c2c2c2"/><rect x="609.42" y="8.3" width="1.1" height="3" fill="#c2c2c2"/><rect x="613.08" y="8.3" width="1.1" height="3" fill="#c2c2c2"/><rect x="616.75" y="8.3" width="1.1" height="3" fill="#c2c2c2"/><rect x="620.42" y="8.3" width="1.1" height="3" fill="#c2c2c2"/><rect x="624.08" y="8.3" width="1.1" height="3" fill="#c2c2c2"/><rect x="627.70" y="0.6" width="1.2" height="11" fill="#c4c4c4"/><rect x="631.42" y="8.3" width="1.1" height="3" fill="#c2c2c2"/><rect x="635.08" y="8.3" width="1.1" height="3" fill="#c2c2c2"/><rect x="638.75" y="8.3" width="1.1" height="3" fill="#c2c2c2"/><rect x="642.42" y="8.3" width="1.1" height="3" fill="#c2c2c2"/><rect x="646.08" y="8.3" width="1.1" height="3" fill="#c2c2c2"/><rect x="649.75" y="8.3" width="1.1" height="3" fill="#c2c2c2"/><rect x="653.42" y="8.3" width="1.1" height="3" fill="#c2c2c2"/><rect x="657.08" y="8.3" width="1.1" height="3" fill="#c2c2c2"/><rect x="660.75" y="8.3" width="1.1" height="3" fill="#c2c2c2"/><rect x="664.37" y="0.6" width="1.2" height="11" fill="#c4c4c4"/><rect x="668.08" y="8.3" width="1.1" height="3" fill="#c2c2c2"/><rect x="671.75" y="8.3" width="1.1" height="3" fill="#c2c2c2"/><rect x="675.42" y="8.3" width="1.1" height="3" fill="#c2c2c2"/><rect x="679.08" y="8.3" width="1.1" height="3" fill="#c2c2c2"/><rect x="682.75" y="8.3" width="1.1" height="3" fill="#c2c2c2"/><rect x="686.42" y="8.3" width="1.1" height="3" fill="#c2c2c2"/><rect x="690.08" y="8.3" width="1.1" height="3" fill="#c2c2c2"/><rect x="693.75" y="8.3" width="1.1" height="3" fill="#c2c2c2"/><rect x="697.42" y="8.3" width="1.1" height="3" fill="#c2c2c2"/><rect x="701.03" y="0.6" width="1.2" height="11" fill="#c4c4c4"/><rect x="704.75" y="8.3" width="1.1" height="3" fill="#c2c2c2"/><rect x="708.42" y="8.3" width="1.1" height="3" fill="#c2c2c2"/><rect x="712.08" y="8.3" width="1.1" height="3" fill="#c2c2c2"/><rect x="715.75" y="8.3" width="1.1" height="3" fill="#c2c2c2"/><rect x="719.42" y="8.3" width="1.1" height="3" fill="#c2c2c2"/><rect x="723.08" y="8.3" width="1.1" height="3" fill="#c2c2c2"/><rect x="726.75" y="8.3" width="1.1" height="3" fill="#c2c2c2"/><rect x="730.42" y="8.3" width="1.1" height="3" fill="#c2c2c2"/><rect x="734.08" y="8.3" width="1.1" height="3" fill="#c2c2c2"/><rect x="737.70" y="0.6" width="1.2" height="11" fill="#c4c4c4"/><rect x="741.42" y="8.3" width="1.1" height="3" fill="#c2c2c2"/><rect x="745.08" y="8.3" width="1.1" height="3" fill="#c2c2c2"/><rect x="748.75" y="8.3" width="1.1" height="3" fill="#c2c2c2"/><rect x="752.42" y="8.3" width="1.1" height="3" fill="#c2c2c2"/><rect x="756.08" y="8.3" width="1.1" height="3" fill="#c2c2c2"/><rect x="759.75" y="8.3" width="1.1" height="3" fill="#c2c2c2"/><rect x="763.42" y="8.3" width="1.1" height="3" fill="#c2c2c2"/><rect x="767.08" y="8.3" width="1.1" height="3" fill="#c2c2c2"/><rect x="770.75" y="8.3" width="1.1" height="3" fill="#c2c2c2"/><rect x="774.37" y="0.6" width="1.2" height="11" fill="#c4c4c4"/><rect x="778.08" y="8.3" width="1.1" height="3" fill="#c2c2c2"/><rect x="781.75" y="8.3" width="1.1" height="3" fill="#c2c2c2"/><rect x="785.42" y="8.3" width="1.1" height="3" fill="#c2c2c2"/><rect x="789.08" y="8.3" width="1.1" height="3" fill="#c2c2c2"/><rect x="792.75" y="8.3" width="1.1" height="3" fill="#c2c2c2"/><rect x="796.42" y="8.3" width="1.1" height="3" fill="#c2c2c2"/><rect x="800.08" y="8.3" width="1.1" height="3" fill="#c2c2c2"/><rect x="803.75" y="8.3" width="1.1" height="3" fill="#c2c2c2"/><rect x="807.42" y="8.3" width="1.1" height="3" fill="#c2c2c2"/><rect x="811.03" y="0.6" width="1.2" height="11" fill="#c4c4c4"/><rect x="814.75" y="8.3" width="1.1" height="3" fill="#c2c2c2"/><rect x="818.42" y="8.3" width="1.1" height="3" fill="#c2c2c2"/><rect x="822.08" y="8.3" width="1.1" height="3" fill="#c2c2c2"/><rect x="825.75" y="8.3" width="1.1" height="3" fill="#c2c2c2"/><rect x="829.42" y="8.3" width="1.1" height="3" fill="#c2c2c2"/><rect x="833.08" y="8.3" width="1.1" height="3" fill="#c2c2c2"/><rect x="836.75" y="8.3" width="1.1" height="3" fill="#c2c2c2"/><rect x="840.42" y="8.3" width="1.1" height="3" fill="#c2c2c2"/><rect x="844.08" y="8.3" width="1.1" height="3" fill="#c2c2c2"/><rect x="12" y="10.5" width="836" height="1.2" fill="#b0b0b0"/><text x="43.53" y="7.2" font-size="7" fill="#e2e2e2" textLength="10.2" lengthAdjust="spacingAndGlyphs">100</text><text x="80.20" y="7.2" font-size="7" fill="#e2e2e2" textLength="3.4" lengthAdjust="spacingAndGlyphs">0</text><text x="116.87" y="7.2" font-size="7" fill="#e2e2e2" textLength="10.2" lengthAdjust="spacingAndGlyphs">100</text><text x="153.53" y="7.2" font-size="7" fill="#e2e2e2" textLength="10.2" lengthAdjust="spacingAndGlyphs">200</text><text x="190.20" y="7.2" font-size="7" fill="#e2e2e2" textLength="10.2" lengthAdjust="spacingAndGlyphs">300</text><text x="226.87" y="7.2" font-size="7" fill="#e2e2e2" textLength="10.2" lengthAdjust="spacingAndGlyphs">400</text><text x="263.53" y="7.2" font-size="7" fill="#e2e2e2" textLength="10.2" lengthAdjust="spacingAndGlyphs">500</text><text x="300.20" y="7.2" font-size="7" fill="#e2e2e2" textLength="10.2" lengthAdjust="spacingAndGlyphs">600</text><text x="336.87" y="7.2" font-size="7" fill="#e2e2e2" textLength="10.2" lengthAdjust="spacingAndGlyphs">700</text><text x="373.53" y="7.2" font-size="7" fill="#e2e2e2" textLength="10.2" lengthAdjust="spacingAndGlyphs">800</text><text x="410.20" y="7.2" font-size="7" fill="#e2e2e2" textLength="10.2" lengthAdjust="spacingAndGlyphs">900</text><text x="446.87" y="7.2" font-size="7" fill="#e2e2e2" textLength="13.6" lengthAdjust="spacingAndGlyphs">1000</text><text x="483.53" y="7.2" font-size="7" fill="#e2e2e2" textLength="13.6" lengthAdjust="spacingAndGlyphs">1100</text><text x="520.20" y="7.2" font-size="7" fill="#e2e2e2" textLength="13.6" lengthAdjust="spacingAndGlyphs">1200</text><text x="556.87" y="7.2" font-size="7" fill="#e2e2e2" textLength="13.6" lengthAdjust="spacingAndGlyphs">1300</text><text x="593.53" y="7.2" font-size="7" fill="#e2e2e2" textLength="13.6" lengthAdjust="spacingAndGlyphs">1400</text><text x="630.20" y="7.2" font-size="7" fill="#e2e2e2" textLength="13.6" lengthAdjust="spacingAndGlyphs">1500</text><text x="666.87" y="7.2" font-size="7" fill="#e2e2e2" textLength="13.6" lengthAdjust="spacingAndGlyphs">1600</text><text x="703.53" y="7.2" font-size="7" fill="#e2e2e2" textLength="13.6" lengthAdjust="spacingAndGlyphs">1700</text><text x="740.20" y="7.2" font-size="7" fill="#e2e2e2" textLength="13.6" lengthAdjust="spacingAndGlyphs">1800</text><text x="776.87" y="7.2" font-size="7" fill="#e2e2e2" textLength="13.6" lengthAdjust="spacingAndGlyphs">1900</text><text x="813.53" y="7.2" font-size="7" fill="#e2e2e2" textLength="13.6" lengthAdjust="spacingAndGlyphs">2000</text><text x="850.20" y="7.2" font-size="7" fill="#e2e2e2" textLength="13.6" lengthAdjust="spacingAndGlyphs">2100</text><rect x="295.6" y="1" width="1.4" height="11" fill="#2d7fd6"/><path d="M11.5 0.5 V12 M0 10.8 H12" stroke="#d6d6d6" stroke-width="1.1"/><path d="M6.6 2.6 V10.6 M1 6.6 H11" stroke="#bdbdbd" stroke-width="1"/></svg>
<div style="left:265px;top:71px;width:837px;height:2.2px;background:#171313;"></div>
<svg style="left:253px;top:71px;font-family:'Liberation Sans',sans-serif;" width="12" height="401" viewBox="0 0 12 401"><rect x="0" y="0" width="12" height="401" fill="#000"/><rect x="0.6" y="2.60" width="11" height="1.2" fill="#c4c4c4"/><rect x="8.3" y="6.32" width="3" height="1.1" fill="#c2c2c2"/><rect x="8.3" y="9.98" width="3" height="1.1" fill="#c2c2c2"/><rect x="8.3" y="13.65" width="3" height="1.1" fill="#c2c2c2"/><rect x="8.3" y="17.32" width="3" height="1.1" fill="#c2c2c2"/><rect x="8.3" y="20.98" width="3" height="1.1" fill="#c2c2c2"/><rect x="8.3" y="24.65" width="3" height="1.1" fill="#c2c2c2"/><rect x="8.3" y="28.32" width="3" height="1.1" fill="#c2c2c2"/><rect x="8.3" y="31.98" width="3" height="1.1" fill="#c2c2c2"/><rect x="8.3" y="35.65" width="3" height="1.1" fill="#c2c2c2"/><rect x="0.6" y="39.27" width="11" height="1.2" fill="#c4c4c4"/><rect x="8.3" y="42.98" width="3" height="1.1" fill="#c2c2c2"/><rect x="8.3" y="46.65" width="3" height="1.1" fill="#c2c2c2"/><rect x="8.3" y="50.32" width="3" height="1.1" fill="#c2c2c2"/><rect x="8.3" y="53.98" width="3" height="1.1" fill="#c2c2c2"/><rect x="8.3" y="57.65" width="3" height="1.1" fill="#c2c2c2"/><rect x="8.3" y="61.32" width="3" height="1.1" fill="#c2c2c2"/><rect x="8.3" y="64.98" width="3" height="1.1" fill="#c2c2c2"/><rect x="8.3" y="68.65" width="3" height="1.1" fill="#c2c2c2"/><rect x="8.3" y="72.32" width="3" height="1.1" fill="#c2c2c2"/><rect x="0.6" y="75.93" width="11" height="1.2" fill="#c4c4c4"/><rect x="8.3" y="79.65" width="3" height="1.1" fill="#c2c2c2"/><rect x="8.3" y="83.32" width="3" height="1.1" fill="#c2c2c2"/><rect x="8.3" y="86.98" width="3" height="1.1" fill="#c2c2c2"/><rect x="8.3" y="90.65" width="3" height="1.1" fill="#c2c2c2"/><rect x="8.3" y="94.32" width="3" height="1.1" fill="#c2c2c2"/><rect x="8.3" y="97.98" width="3" height="1.1" fill="#c2c2c2"/><rect x="8.3" y="101.65" width="3" height="1.1" fill="#c2c2c2"/><rect x="8.3" y="105.32" width="3" height="1.1" fill="#c2c2c2"/><rect x="8.3" y="108.98" width="3" height="1.1" fill="#c2c2c2"/><rect x="0.6" y="112.60" width="11" height="1.2" fill="#c4c4c4"/><rect x="8.3" y="116.32" width="3" height="1.1" fill="#c2c2c2"/><rect x="8.3" y="119.98" width="3" height="1.1" fill="#c2c2c2"/><rect x="8.3" y="123.65" width="3" height="1.1" fill="#c2c2c2"/><rect x="8.3" y="127.32" width="3" height="1.1" fill="#c2c2c2"/><rect x="8.3" y="130.98" width="3" height="1.1" fill="#c2c2c2"/><rect x="8.3" y="134.65" width="3" height="1.1" fill="#c2c2c2"/><rect x="8.3" y="138.32" width="3" height="1.1" fill="#c2c2c2"/><rect x="8.3" y="141.98" width="3" height="1.1" fill="#c2c2c2"/><rect x="8.3" y="145.65" width="3" height="1.1" fill="#c2c2c2"/><rect x="0.6" y="149.27" width="11" height="1.2" fill="#c4c4c4"/><rect x="8.3" y="152.98" width="3" height="1.1" fill="#c2c2c2"/><rect x="8.3" y="156.65" width="3" height="1.1" fill="#c2c2c2"/><rect x="8.3" y="160.32" width="3" height="1.1" fill="#c2c2c2"/><rect x="8.3" y="163.98" width="3" height="1.1" fill="#c2c2c2"/><rect x="8.3" y="167.65" width="3" height="1.1" fill="#c2c2c2"/><rect x="8.3" y="171.32" width="3" height="1.1" fill="#c2c2c2"/><rect x="8.3" y="174.98" width="3" height="1.1" fill="#c2c2c2"/><rect x="8.3" y="178.65" width="3" height="1.1" fill="#c2c2c2"/><rect x="8.3" y="182.32" width="3" height="1.1" fill="#c2c2c2"/><rect x="0.6" y="185.93" width="11" height="1.2" fill="#c4c4c4"/><rect x="8.3" y="189.65" width="3" height="1.1" fill="#c2c2c2"/><rect x="8.3" y="193.32" width="3" height="1.1" fill="#c2c2c2"/><rect x="8.3" y="196.98" width="3" height="1.1" fill="#c2c2c2"/><rect x="8.3" y="200.65" width="3" height="1.1" fill="#c2c2c2"/><rect x="8.3" y="204.32" width="3" height="1.1" fill="#c2c2c2"/><rect x="8.3" y="207.98" width="3" height="1.1" fill="#c2c2c2"/><rect x="8.3" y="211.65" width="3" height="1.1" fill="#c2c2c2"/><rect x="8.3" y="215.32" width="3" height="1.1" fill="#c2c2c2"/><rect x="8.3" y="218.98" width="3" height="1.1" fill="#c2c2c2"/><rect x="0.6" y="222.60" width="11" height="1.2" fill="#c4c4c4"/><rect x="8.3" y="226.32" width="3" height="1.1" fill="#c2c2c2"/><rect x="8.3" y="229.98" width="3" height="1.1" fill="#c2c2c2"/><rect x="8.3" y="233.65" width="3" height="1.1" fill="#c2c2c2"/><rect x="8.3" y="237.32" width="3" height="1.1" fill="#c2c2c2"/><rect x="8.3" y="240.98" width="3" height="1.1" fill="#c2c2c2"/><rect x="8.3" y="244.65" width="3" height="1.1" fill="#c2c2c2"/><rect x="8.3" y="248.32" width="3" height="1.1" fill="#c2c2c2"/><rect x="8.3" y="251.98" width="3" height="1.1" fill="#c2c2c2"/><rect x="8.3" y="255.65" width="3" height="1.1" fill="#c2c2c2"/><rect x="0.6" y="259.27" width="11" height="1.2" fill="#c4c4c4"/><rect x="8.3" y="262.98" width="3" height="1.1" fill="#c2c2c2"/><rect x="8.3" y="266.65" width="3" height="1.1" fill="#c2c2c2"/><rect x="8.3" y="270.32" width="3" height="1.1" fill="#c2c2c2"/><rect x="8.3" y="273.98" width="3" height="1.1" fill="#c2c2c2"/><rect x="8.3" y="277.65" width="3" height="1.1" fill="#c2c2c2"/><rect x="8.3" y="281.32" width="3" height="1.1" fill="#c2c2c2"/><rect x="8.3" y="284.98" width="3" height="1.1" fill="#c2c2c2"/><rect x="8.3" y="288.65" width="3" height="1.1" fill="#c2c2c2"/><rect x="8.3" y="292.32" width="3" height="1.1" fill="#c2c2c2"/><rect x="0.6" y="295.93" width="11" height="1.2" fill="#c4c4c4"/><rect x="8.3" y="299.65" width="3" height="1.1" fill="#c2c2c2"/><rect x="8.3" y="303.32" width="3" height="1.1" fill="#c2c2c2"/><rect x="8.3" y="306.98" width="3" height="1.1" fill="#c2c2c2"/><rect x="8.3" y="310.65" width="3" height="1.1" fill="#c2c2c2"/><rect x="8.3" y="314.32" width="3" height="1.1" fill="#c2c2c2"/><rect x="8.3" y="317.98" width="3" height="1.1" fill="#c2c2c2"/><rect x="8.3" y="321.65" width="3" height="1.1" fill="#c2c2c2"/><rect x="8.3" y="325.32" width="3" height="1.1" fill="#c2c2c2"/><rect x="8.3" y="328.98" width="3" height="1.1" fill="#c2c2c2"/><rect x="0.6" y="332.60" width="11" height="1.2" fill="#c4c4c4"/><rect x="8.3" y="336.32" width="3" height="1.1" fill="#c2c2c2"/><rect x="8.3" y="339.98" width="3" height="1.1" fill="#c2c2c2"/><rect x="8.3" y="343.65" width="3" height="1.1" fill="#c2c2c2"/><rect x="8.3" y="347.32" width="3" height="1.1" fill="#c2c2c2"/><rect x="8.3" y="350.98" width="3" height="1.1" fill="#c2c2c2"/><rect x="8.3" y="354.65" width="3" height="1.1" fill="#c2c2c2"/><rect x="8.3" y="358.32" width="3" height="1.1" fill="#c2c2c2"/><rect x="8.3" y="361.98" width="3" height="1.1" fill="#c2c2c2"/><rect x="8.3" y="365.65" width="3" height="1.1" fill="#c2c2c2"/><rect x="0.6" y="369.27" width="11" height="1.2" fill="#c4c4c4"/><rect x="8.3" y="372.98" width="3" height="1.1" fill="#c2c2c2"/><rect x="8.3" y="376.65" width="3" height="1.1" fill="#c2c2c2"/><rect x="8.3" y="380.32" width="3" height="1.1" fill="#c2c2c2"/><rect x="8.3" y="383.98" width="3" height="1.1" fill="#c2c2c2"/><rect x="8.3" y="387.65" width="3" height="1.1" fill="#c2c2c2"/><rect x="8.3" y="391.32" width="3" height="1.1" fill="#c2c2c2"/><rect x="8.3" y="394.98" width="3" height="1.1" fill="#c2c2c2"/><rect x="8.3" y="398.65" width="3" height="1.1" fill="#c2c2c2"/><rect x="10.5" y="0" width="1.2" height="401" fill="#b0b0b0"/><text x="2.4" y="9.80" font-size="6.6" fill="#dcdcdc" textLength="3.4" lengthAdjust="spacingAndGlyphs">0</text><text x="2.4" y="46.47" font-size="6.6" fill="#dcdcdc" textLength="3.4" lengthAdjust="spacingAndGlyphs">1</text><text x="2.4" y="51.27" font-size="6.6" fill="#dcdcdc" textLength="3.4" lengthAdjust="spacingAndGlyphs">0</text><text x="2.4" y="56.07" font-size="6.6" fill="#dcdcdc" textLength="3.4" lengthAdjust="spacingAndGlyphs">0</text><text x="2.4" y="83.13" font-size="6.6" fill="#dcdcdc" textLength="3.4" lengthAdjust="spacingAndGlyphs">2</text><text x="2.4" y="87.93" font-size="6.6" fill="#dcdcdc" textLength="3.4" lengthAdjust="spacingAndGlyphs">0</text><text x="2.4" y="92.73" font-size="6.6" fill="#dcdcdc" textLength="3.4" lengthAdjust="spacingAndGlyphs">0</text><text x="2.4" y="119.80" font-size="6.6" fill="#dcdcdc" textLength="3.4" lengthAdjust="spacingAndGlyphs">3</text><text x="2.4" y="124.60" font-size="6.6" fill="#dcdcdc" textLength="3.4" lengthAdjust="spacingAndGlyphs">0</text><text x="2.4" y="129.40" font-size="6.6" fill="#dcdcdc" textLength="3.4" lengthAdjust="spacingAndGlyphs">0</text><text x="2.4" y="156.47" font-size="6.6" fill="#dcdcdc" textLength="3.4" lengthAdjust="spacingAndGlyphs">4</text><text x="2.4" y="161.27" font-size="6.6" fill="#dcdcdc" textLength="3.4" lengthAdjust="spacingAndGlyphs">0</text><text x="2.4" y="166.07" font-size="6.6" fill="#dcdcdc" textLength="3.4" lengthAdjust="spacingAndGlyphs">0</text><text x="2.4" y="193.13" font-size="6.6" fill="#dcdcdc" textLength="3.4" lengthAdjust="spacingAndGlyphs">5</text><text x="2.4" y="197.93" font-size="6.6" fill="#dcdcdc" textLength="3.4" lengthAdjust="spacingAndGlyphs">0</text><text x="2.4" y="202.73" font-size="6.6" fill="#dcdcdc" textLength="3.4" lengthAdjust="spacingAndGlyphs">0</text><text x="2.4" y="229.80" font-size="6.6" fill="#dcdcdc" textLength="3.4" lengthAdjust="spacingAndGlyphs">6</text><text x="2.4" y="234.60" font-size="6.6" fill="#dcdcdc" textLength="3.4" lengthAdjust="spacingAndGlyphs">0</text><text x="2.4" y="239.40" font-size="6.6" fill="#dcdcdc" textLength="3.4" lengthAdjust="spacingAndGlyphs">0</text><text x="2.4" y="266.47" font-size="6.6" fill="#dcdcdc" textLength="3.4" lengthAdjust="spacingAndGlyphs">7</text><text x="2.4" y="271.27" font-size="6.6" fill="#dcdcdc" textLength="3.4" lengthAdjust="spacingAndGlyphs">0</text><text x="2.4" y="276.07" font-size="6.6" fill="#dcdcdc" textLength="3.4" lengthAdjust="spacingAndGlyphs">0</text><text x="2.4" y="303.13" font-size="6.6" fill="#dcdcdc" textLength="3.4" lengthAdjust="spacingAndGlyphs">8</text><text x="2.4" y="307.93" font-size="6.6" fill="#dcdcdc" textLength="3.4" lengthAdjust="spacingAndGlyphs">0</text><text x="2.4" y="312.73" font-size="6.6" fill="#dcdcdc" textLength="3.4" lengthAdjust="spacingAndGlyphs">0</text><text x="2.4" y="339.80" font-size="6.6" fill="#dcdcdc" textLength="3.4" lengthAdjust="spacingAndGlyphs">9</text><text x="2.4" y="344.60" font-size="6.6" fill="#dcdcdc" textLength="3.4" lengthAdjust="spacingAndGlyphs">0</text><text x="2.4" y="349.40" font-size="6.6" fill="#dcdcdc" textLength="3.4" lengthAdjust="spacingAndGlyphs">0</text><text x="2.4" y="376.47" font-size="6.6" fill="#dcdcdc" textLength="3.4" lengthAdjust="spacingAndGlyphs">1</text><text x="2.4" y="381.27" font-size="6.6" fill="#dcdcdc" textLength="3.4" lengthAdjust="spacingAndGlyphs">0</text><text x="2.4" y="386.07" font-size="6.6" fill="#dcdcdc" textLength="3.4" lengthAdjust="spacingAndGlyphs">0</text><text x="2.4" y="390.87" font-size="6.6" fill="#dcdcdc" textLength="3.4" lengthAdjust="spacingAndGlyphs">0</text><rect x="0" y="400.0" width="12" height="1.2" fill="#2d7fd6"/></svg>
<div style="left:330.9px;top:74px;width:704.2px;height:396.5px;background:#1297f5;"></div>
<svg style="left:440px;top:195px;" width="500" height="160" viewBox="440 195 500 160"><g fill="#fff"><polygon points="472.20,206.90 484.20,206.90 495.60,224.60 507.00,206.90 519.20,206.90 501.30,235.00 501.30,253.80 490.10,253.80 490.10,235.00"/><path fill-rule="evenodd" d="M517.50 230.30 A25 24.8 0 1 1 567.50 230.30 A25 24.8 0 1 1 517.50 230.30Z M528.30 230.30 A14.2 14.4 0 1 0 556.70 230.30 A14.2 14.4 0 1 0 528.30 230.30Z"/><path d="M572.3 206.9 H582.8 V234 A10.15 10.9 0 0 0 603.1 234 V206.9 H613.4 V234.4 A20.55 20.7 0 0 1 572.3 234.4 Z"/><clipPath id="cc"><rect x="620" y="200" width="53.7" height="60"/></clipPath><path fill-rule="evenodd" d="M633.40 230.30 A27.4 24.9 0 1 1 688.20 230.30 A27.4 24.9 0 1 1 633.40 230.30Z M644.90 230.30 A15.9 14.9 0 1 0 676.70 230.30 A15.9 14.9 0 1 0 644.90 230.30Z" clip-path="url(#cc)"/><polygon points="676.90,253.80 696.30,206.90 708.30,206.90 726.90,253.80 715.00,253.80 712.20,246.30 692.10,246.30 689.50,253.80"/><polygon fill="#1297f5" points="702.10,220.20 695.10,236.60 708.80,236.60"/><polygon points="732.30,206.90 744.90,206.90 764.30,237.40 764.30,206.90 774.70,206.90 774.70,253.80 762.20,253.80 742.60,222.80 742.60,253.80 732.30,253.80"/><path fill-rule="evenodd" d="M799 206.9 H819.7 A23.45 23.45 0 0 1 819.7 253.8 H799 Z M809.7 216.2 V244.4 H818.6 A14.1 14.1 0 0 0 818.6 216.2 Z"/><path fill-rule="evenodd" d="M846.20 230.30 A24.9 24.8 0 1 1 896.00 230.30 A24.9 24.8 0 1 1 846.20 230.30Z M856.80 230.30 A14.3 14.4 0 1 0 885.40 230.30 A14.3 14.4 0 1 0 856.80 230.30Z"/><polygon points="456.90,337.80 476.30,290.60 488.30,290.60 506.90,337.80 495.00,337.80 492.20,330.30 472.10,330.30 469.50,337.80"/><polygon fill="#1297f5" points="482.10,303.90 475.10,320.60 488.80,320.60"/><polygon points="512.10,290.60 522.80,290.60 522.80,327.90 546.30,327.90 546.30,337.80 512.10,337.80"/><polygon points="552.50,290.60 563.20,290.60 563.20,327.90 586.90,327.90 586.90,337.80 552.50,337.80"/><path fill-rule="evenodd" d="M605.20 314.00 A24.9 24.8 0 1 1 655.00 314.00 A24.9 24.8 0 1 1 605.20 314.00Z M615.70 314.00 A14.4 14.6 0 1 0 644.50 314.00 A14.4 14.6 0 1 0 615.70 314.00Z"/><polygon points="661.20,290.60 696.50,290.60 696.50,300.20 671.90,300.20 671.90,310.20 691.90,310.20 691.90,319.90 671.90,319.90 671.90,337.80 661.20,337.80"/><polygon points="715.00,290.60 753.50,290.60 753.50,300.30 739.60,300.30 739.60,337.80 728.90,337.80 728.90,300.30 715.00,300.30"/><polygon points="759.70,290.60 770.30,290.60 770.30,308.90 791.10,308.90 791.10,290.60 801.90,290.60 801.90,337.80 791.10,337.80 791.10,318.90 770.30,318.90 770.30,337.80 759.70,337.80"/><polygon points="806.90,337.80 826.30,290.60 838.30,290.60 856.90,337.80 845.00,337.80 842.20,330.30 822.10,330.30 819.50,337.80"/><polygon fill="#1297f5" points="832.10,303.90 825.10,320.60 838.80,320.60"/><polygon points="853.80,290.60 892.30,290.60 892.30,300.30 878.40,300.30 878.40,337.80 867.70,337.80 867.70,300.30 853.80,300.30"/><polygon points="897.40,290.60 908.60,290.60 907.20,322.20 898.80,322.20"/><circle cx="903" cy="332.3" r="6.1"/></g></svg>
<svg style="left:330.9px;top:74px;" width="704.2" height="396.5" viewBox="0 0 704.2 396.5"><rect x="35.60" y="19.70" width="633.20" height="356.60" fill="none" stroke="#536270" stroke-width="1.15"/><rect x="70.70" y="39.50" width="563.00" height="317.00" fill="none" stroke="#536270" stroke-width="1.15"/><path d="M114.50 39.5 V356.5" stroke="#536270" stroke-width="1.15"/><path d="M141.30 39.5 V356.5" stroke="#536270" stroke-width="1.15"/><path d="M563.70 39.5 V356.5" stroke="#536270" stroke-width="1.15"/><path d="M589.90 39.5 V356.5" stroke="#536270" stroke-width="1.15"/><path d="M343.4 198 H361.4 M352.4 189 V207" stroke="#536270" stroke-width="1.15"/><path d="M352.4 19.700000000000003 v11 M352.4 376.3 v-11 M35.60000000000002 198 h18 M668.8000000000001 198 h-18" stroke="#536270" stroke-width="1.15"/></svg>
<div style="left:253px;top:476.3px;width:849px;height:1.3px;background:#1e1e1e;"></div>
<div style="left:257px;top:479.5px;width:50px;height:11.6px;background:#1c1c1c;border-radius:2.5px;box-shadow:0 0 0 1px #2e2e2e"></div>
<span style="left:262.00px;top:482.38px;font-size:9px;line-height:9px;color:#b4b4b4;transform:scaleX(0.9372);transform-origin:left top;">(50%)</span>
<svg style="left:297px;top:483.5px;" width="8" height="5" viewBox="0 0 8 5"><path d="M1 1 L4 4 L7 1" stroke="#b0b0b0" stroke-width="1.1" fill="none"/></svg>
<div style="left:311.5px;top:480px;width:1px;height:12px;background:#323232;"></div>
<div style="left:316px;top:479.5px;width:62px;height:11.6px;background:#1c1c1c;border-radius:2.5px;box-shadow:0 0 0 1px #2e2e2e"></div>
<span style="left:321.00px;top:482.38px;font-size:9px;line-height:9px;color:#b4b4b4;transform:scaleX(0.9309);transform-origin:left top;">Full</span>
<svg style="left:368px;top:483.5px;" width="8" height="5" viewBox="0 0 8 5"><path d="M1 1 L4 4 L7 1" stroke="#b0b0b0" stroke-width="1.1" fill="none"/></svg>
<div style="left:382px;top:480px;width:1px;height:12px;background:#323232;"></div>
<div style="left:387.5px;top:479px;width:14.5px;height:13.6px;background:#171717;border-radius:2px;"></div>
<svg style="left:389px;top:480.5px;" width="12" height="11" viewBox="0 0 12 11"><rect x="0.7" y="0.7" width="10.6" height="9.6" rx="1" fill="none" stroke="#e2e2e2" stroke-width="1.2"/><path d="M4 3 L8 6 L6.2 6.4 L7 8.4 L6 8.8 L5.2 6.8 L4 8 Z" fill="#e2e2e2"/></svg>
<svg style="left:405px;top:480.5px;" width="12" height="11" viewBox="0 0 12 11"><rect x="0.7" y="0.7" width="10.6" height="9.6" rx="1" fill="none" stroke="#e2e2e2" stroke-width="1.2"/><path d="M2.6 2.8 h2 v2 h-2z M7.4 2.8 h2 v2 h-2z M5 4.6 h2 v2 h-2z M2.6 6.4 h2 v2 h-2z M7.4 6.4 h2 v2 h-2z" fill="#e2e2e2"/></svg>
<div style="left:420px;top:479px;width:16px;height:14px;background:#161616;border-radius:2px;"></div>
<svg style="left:421.5px;top:480.5px;" width="13" height="11" viewBox="0 0 13 11"><path d="M3 2.6 L10.6 1.6 L9.6 8.8 H2.2 Z" fill="none" stroke="#2f8be8" stroke-width="1.2"/><rect x="1" y="7.4" width="2.4" height="2.4" fill="#2f8be8"/><rect x="9.4" y="0.6" width="2.4" height="2.4" fill="#2f8be8"/></svg>
<svg style="left:437px;top:480.5px;" width="12" height="11" viewBox="0 0 12 11"><rect x="0.7" y="0.7" width="10.6" height="9.6" rx="1" fill="none" stroke="#e2e2e2" stroke-width="1.2"/><rect x="3" y="3" width="6" height="5" fill="#e2e2e2"/></svg>
<svg style="left:453px;top:480px;" width="13" height="13" viewBox="0 0 13 13"><rect x="1" y="1" width="10" height="7.4" rx="1" fill="none" stroke="#e2e2e2" stroke-width="1.2"/><path d="M6 1 V8.4 M1 4.7 H11" stroke="#e2e2e2" stroke-width="1"/><path d="M8 10 l3 0 l-1.5 2z" fill="#e2e2e2"/></svg>
<div style="left:471px;top:480px;width:1px;height:12px;background:#323232;"></div>
<svg style="left:477px;top:480px;" width="13" height="13" viewBox="0 0 13 13"><circle cx="5.4" cy="3.8" r="2.6" fill="#e03030"/><circle cx="3.6" cy="6.8" r="2.6" fill="#2fb84a"/><circle cx="7.2" cy="6.8" r="2.6" fill="#2b6fe0"/><path d="M7.8 10.4 l3 0 l-1.5 2z" fill="#e2e2e2"/></svg>
<svg style="left:494px;top:480.5px;" width="11" height="11" viewBox="0 0 11 11"><circle cx="5.5" cy="5.5" r="4.6" fill="#e2e2e2"/><circle cx="5.5" cy="5.5" r="1.9" fill="#232323"/><path d="M5.5 1 L7 4 M10 5.5 L7 6.6 M5.5 10 L4.2 7 M1 5.5 L4 4.4" stroke="#232323" stroke-width=".9"/></svg>
<span style="left:508.50px;top:482.38px;font-size:9px;line-height:9px;color:#2d8ceb;transform:scaleX(0.9005);transform-origin:left top;">+0.0</span>
<div style="left:535px;top:480px;width:1px;height:12px;background:#323232;"></div>
<svg style="left:542px;top:481.5px;" width="12" height="9" viewBox="0 0 12 9"><path d="M0.6 2 H3.2 L4 0.8 H7.6 L8.4 2 H11 V8.4 H0.6 Z" fill="#e2e2e2"/><circle cx="5.8" cy="5" r="2" fill="#232323"/></svg>
<svg style="left:558px;top:480.5px;" width="13" height="11" viewBox="0 0 13 11"><path d="M2 8.4 L7.4 2.6 Q9.6 1 11 3 Q12 5 10 6.4 L6 9.8 Z" fill="none" stroke="#4a4a4a" stroke-width="1.2"/></svg>
<div style="left:576px;top:480px;width:1px;height:12px;background:#323232;"></div>
<div style="left:580.5px;top:479.5px;width:49px;height:11.6px;background:#1d1d1d;border-radius:2.5px;box-shadow:0 0 0 1px #2a2a2a"></div>
<span style="left:585.50px;top:482.38px;font-size:9px;line-height:9px;color:#a8a8a8;transform:scaleX(0.8815);transform-origin:left top;">0;00;02;17</span>
<div style="left:633px;top:480px;width:1px;height:12px;background:#323232;"></div>
<div style="left:1104.5px;top:20px;width:160.5px;height:473px;background:#232323;"></div>
<span style="left:1114.30px;top:25.98px;font-size:9px;line-height:9px;color:#a9a9a9;transform:scaleX(0.8993);transform-origin:left top;">Info</span>
<div style="left:1105.5px;top:39.8px;width:149.5px;height:1.6px;background:#181818;"></div>
<span style="left:1114.30px;top:47.98px;font-size:9px;line-height:9px;color:#a9a9a9;transform:scaleX(0.8905);transform-origin:left top;">Audio</span>
<div style="left:1105.5px;top:61.8px;width:149.5px;height:1.6px;background:#181818;"></div>
<span style="left:1114.30px;top:69.98px;font-size:9px;line-height:9px;color:#a9a9a9;transform:scaleX(0.9372);transform-origin:left top;">Preview</span>
<div style="left:1105.5px;top:83.8px;width:149.5px;height:1.6px;background:#181818;"></div>
<span style="left:1114.30px;top:91.98px;font-size:9px;line-height:9px;color:#a9a9a9;transform:scaleX(0.8858);transform-origin:left top;">Effects &amp; Presets</span>
<div style="left:1105.5px;top:105.8px;width:149.5px;height:1.6px;background:#181818;"></div>
<span style="left:1114.30px;top:113.98px;font-size:9px;line-height:9px;color:#a9a9a9;transform:scaleX(0.9126);transform-origin:left top;">Libraries</span>
<div style="left:1105.5px;top:127.8px;width:149.5px;height:1.6px;background:#181818;"></div>
<span style="left:1114.30px;top:135.98px;font-size:9px;line-height:9px;color:#a9a9a9;transform:scaleX(0.8983);transform-origin:left top;">Character</span>
<div style="left:1105.5px;top:149.8px;width:149.5px;height:1.6px;background:#181818;"></div>
<span style="left:1114.30px;top:157.98px;font-size:9px;line-height:9px;color:#a9a9a9;transform:scaleX(0.8922);transform-origin:left top;">Paragraph</span>
<div style="left:1105.5px;top:171.8px;width:149.5px;height:1.6px;background:#181818;"></div>
<span style="left:1114.30px;top:179.98px;font-size:9px;line-height:9px;color:#a9a9a9;transform:scaleX(0.8949);transform-origin:left top;">Tracker</span>
<div style="left:1105.5px;top:193.8px;width:149.5px;height:1.6px;background:#181818;"></div>
<span style="left:1114.30px;top:201.98px;font-size:9px;line-height:9px;color:#a9a9a9;transform:scaleX(0.9274);transform-origin:left top;">Content-Aware Fill</span>
<div style="left:1105.5px;top:215.8px;width:149.5px;height:1.6px;background:#181818;"></div>
<span style="left:1113.80px;top:224.58px;font-size:9px;line-height:9px;color:#d2d2d2;transform:scaleX(0.9743);transform-origin:left top;">Align</span>
<svg style="left:1241.5px;top:224.8px;" width="8" height="8" viewBox="0 0 8 8"><path d="M0.6 1.2 H6.6 M0.6 3.7 H6.6 M0.6 6.2 H6.6" stroke="#c4c4c4" stroke-width="1.1"/></svg>
<span style="left:1110.00px;top:243.48px;font-size:9px;line-height:9px;color:#a9a9a9;transform:scaleX(0.9027);transform-origin:left top;">Align Layers to:</span>
<div style="left:1173px;top:241.5px;width:81.5px;height:12px;background:#2a2a2a;border-radius:2px"></div>
<span style="left:1179.00px;top:243.48px;font-size:9px;line-height:9px;color:#535353;transform:scaleX(0.8913);transform-origin:left top;">Selection</span>
<svg style="left:1243.5px;top:245px;" width="8" height="5" viewBox="0 0 8 5"><path d="M1 1 L4 4 L7 1" stroke="#444" stroke-width="1.1" fill="none"/></svg>
<svg style="left:1112px;top:258.4px;" width="13" height="13" viewBox="0 0 13 13"><path d="M1 0 V13" stroke="#444444" stroke-width="1.2"/><rect x="2.4" y="2" width="5" height="4" fill="#444444"/><rect x="2.4" y="7.5" width="9" height="4" fill="#444444"/></svg>
<svg style="left:1137px;top:258.4px;" width="13" height="13" viewBox="0 0 13 13"><path d="M6.5 0 V13" stroke="#444444" stroke-width="1.2"/><rect x="4" y="2" width="5" height="4" fill="#444444"/><rect x="2" y="7.5" width="9" height="4" fill="#444444"/></svg>
<svg style="left:1162px;top:258.4px;" width="13" height="13" viewBox="0 0 13 13"><path d="M12 0 V13" stroke="#444444" stroke-width="1.2"/><rect x="5.6" y="2" width="5" height="4" fill="#444444"/><rect x="1.6" y="7.5" width="9" height="4" fill="#444444"/></svg>
<svg style="left:1187px;top:258.4px;" width="13" height="13" viewBox="0 0 13 13"><path d="M0 1 H13" stroke="#444444" stroke-width="1.2"/><rect x="2" y="2.4" width="4" height="9" fill="#444444"/><rect x="7.5" y="2.4" width="4" height="5" fill="#444444"/></svg>
<svg style="left:1212px;top:258.4px;" width="13" height="13" viewBox="0 0 13 13"><path d="M0 6.5 H13" stroke="#444444" stroke-width="1.2"/><rect x="2" y="2" width="4" height="9" fill="#444444"/><rect x="7.5" y="4" width="4" height="5" fill="#444444"/></svg>
<svg style="left:1237px;top:258.4px;" width="13" height="13" viewBox="0 0 13 13"><path d="M0 12 H13" stroke="#444444" stroke-width="1.2"/><rect x="2" y="1.6" width="4" height="9" fill="#444444"/><rect x="7.5" y="5.6" width="4" height="5" fill="#444444"/></svg>
<div style="left:1110px;top:275.2px;width:143px;height:1px;background:#303030;"></div>
<span style="left:1110.00px;top:278.78px;font-size:9px;line-height:9px;color:#a9a9a9;transform:scaleX(0.9139);transform-origin:left top;">Distribute Layers:</span>
<svg style="left:1112px;top:290px;" width="13" height="13" viewBox="0 0 13 13"><path d="M0 1 H13 M0 8 H13" stroke="#3f3f3f" stroke-width="1.1"/><rect x="3" y="2" width="7" height="3.4" fill="#3f3f3f"/><rect x="2" y="9" width="9" height="3.4" fill="#3f3f3f"/></svg>
<svg style="left:1137px;top:290px;" width="13" height="13" viewBox="0 0 13 13"><path d="M0 3.6 H13 M0 10.4 H13" stroke="#3f3f3f" stroke-width="1.1"/><rect x="3" y="2" width="7" height="3.4" fill="#3f3f3f"/><rect x="2" y="8.6" width="9" height="3.4" fill="#3f3f3f"/></svg>
<svg style="left:1162px;top:290px;" width="13" height="13" viewBox="0 0 13 13"><path d="M0 5.6 H13 M0 12.4 H13" stroke="#3f3f3f" stroke-width="1.1"/><rect x="3" y="2" width="7" height="3.4" fill="#3f3f3f"/><rect x="2" y="8.8" width="9" height="3.4" fill="#3f3f3f"/></svg>
<svg style="left:1187px;top:290px;" width="13" height="13" viewBox="0 0 13 13"><path d="M1 0 V13 M8 0 V13" stroke="#3f3f3f" stroke-width="1.1"/><rect x="2" y="3" width="3.4" height="7" fill="#3f3f3f"/><rect x="9" y="2" width="3.4" height="9" fill="#3f3f3f"/></svg>
<svg style="left:1212px;top:290px;" width="13" height="13" viewBox="0 0 13 13"><path d="M3.6 0 V13 M10.4 0 V13" stroke="#3f3f3f" stroke-width="1.1"/><rect x="2" y="3" width="3.4" height="7" fill="#3f3f3f"/><rect x="8.6" y="2" width="3.4" height="9" fill="#3f3f3f"/></svg>
<svg style="left:1237px;top:290px;" width="13" height="13" viewBox="0 0 13 13"><path d="M5.6 0 V13 M12.4 0 V13" stroke="#3f3f3f" stroke-width="1.1"/><rect x="2" y="3" width="3.4" height="7" fill="#3f3f3f"/><rect x="8.8" y="2" width="3.4" height="9" fill="#3f3f3f"/></svg>
<div style="left:15px;top:497.5px;width:1250px;height:220.5px;background:#232323;"></div>
<div style="left:34px;top:502.5px;width:8px;height:8px;background:#c8b18a;"></div>
<span style="left:50.50px;top:502.98px;font-size:9px;line-height:9px;color:#a9a9a9;transform:scaleX(0.8266);transform-origin:left top;">MASTER</span>
<span style="left:123.00px;top:502.98px;font-size:9px;line-height:9px;color:#a9a9a9;transform:scaleX(0.8723);transform-origin:left top;">Render Queue</span>
<div style="left:215px;top:502.5px;width:8px;height:8px;background:#c8b18a;"></div>
<span style="left:232.00px;top:502.98px;font-size:9px;line-height:9px;color:#a9a9a9;transform:scaleX(0.8768);transform-origin:left top;">COMP 04</span>
<svg style="left:295.2px;top:504.7px;" width="6" height="6" viewBox="0 0 6 6"><path d="M0.8 0.8 L5 5 M5 0.8 L0.8 5" stroke="#9a9a9a" stroke-width="0.9"/></svg>
<div style="left:307px;top:502.5px;width:8px;height:8px;background:#c8b18a;"></div>
<span style="left:323.00px;top:502.98px;font-size:9px;line-height:9px;color:#d6d6d6;transform:scaleX(0.9036);transform-origin:left top;">Comp 06</span>
<svg style="left:363.1px;top:503.8px;" width="8" height="8" viewBox="0 0 8 8"><path d="M0.6 1.2 H6.6 M0.6 3.7 H6.6 M0.6 6.2 H6.6" stroke="#b8b8b8" stroke-width="1.1"/></svg>
<div style="left:296px;top:514.4px;width:75px;height:1.8px;background:#d2d2d2;"></div>
<span style="left:27.00px;top:520.87px;font-size:11.5px;line-height:11.5px;color:#2d8ceb;font-weight:bold;transform:scaleX(0.9687);transform-origin:left top;">0;00;02;17</span>
<span style="left:23.00px;top:532.80px;font-size:8.5px;line-height:8.5px;color:#20599a;transform:scaleX(0.9005);transform-origin:left top;">00077 (29.97 fps)</span>
<div style="left:94px;top:523.5px;width:294px;height:12.5px;background:#171717;border-radius:2px;box-shadow:0 0 0 1px #2c2c2c"></div>
<svg style="left:98.5px;top:525.5px;" width="13" height="10" viewBox="0 0 13 10"><circle cx="5.6" cy="3.6" r="2.6" fill="none" stroke="#cfcfcf" stroke-width="1.1"/><path d="M3.8 5.6 L1 8.6" stroke="#cfcfcf" stroke-width="1.3"/><path d="M8.6 5.8 l3.6 0 l-1.8 2.2z" fill="#cfcfcf"/></svg>
<svg style="left:399px;top:523.5px;" width="14" height="13" viewBox="0 0 14 13"><rect x="0.6" y="2" width="4" height="2.4" rx=".6" fill="#d8d8d8"/><rect x="8" y="2" width="4" height="2.4" rx=".6" fill="#d8d8d8"/><rect x="8" y="6" width="4" height="2.4" rx=".6" fill="#d8d8d8"/><path d="M4.4 3.2 H8 M6.2 3.2 V7.2 H8" stroke="#d8d8d8" stroke-width="1" fill="none"/><path d="M9.6 10 l3.2 0 l-1.6 2.2z" fill="#d8d8d8"/></svg>
<svg style="left:424px;top:524.5px;" width="14" height="12" viewBox="0 0 14 12"><path d="M2.6 6.4 Q2.8 1.2 7 1.2 Q11.2 1.2 11.4 6.4 Z" fill="#d8d8d8"/><path d="M0.6 7.6 H13.4 M3.4 7.6 V10.8 M7 7.6 V10.8 M10.6 7.6 V10.8 M1.6 10.8 H12.4" stroke="#d8d8d8" stroke-width="1.2"/></svg>
<svg style="left:443px;top:524px;" width="13" height="13" viewBox="0 0 13 13"><rect x="3.6" y="0.8" width="8.4" height="8.4" fill="#d8d8d8"/><rect x="1" y="3.4" width="8.4" height="8.4" fill="none" stroke="#d8d8d8" stroke-width="1"/><rect x="5.6" y="3.2" width="4.4" height="3" fill="#555"/></svg>
<svg style="left:462px;top:524px;" width="14" height="13" viewBox="0 0 14 13"><g transform="rotate(-38 7 6.5)"><rect x="1" y="3" width="12" height="7" rx="3.5" fill="#8f8f8f" stroke="#d8d8d8" stroke-width="1"/><path d="M4 3.2 V9.8 M6 3.2 V9.8" stroke="#d8d8d8" stroke-width=".8"/></g></svg>
<svg style="left:487px;top:523.7px;" width="13.5" height="12.6" viewBox="0 0 15 14"><rect x="1.4" y="2.6" width="11.6" height="10" rx="1" fill="none" stroke="#d8d8d8" stroke-width="1.1"/><path d="M3 0.8 V2.6 M11.4 0.8 V2.6" stroke="#d8d8d8" stroke-width="1.1"/><path d="M2 4 Q6 4 7.4 8 Q9 12 13 12" stroke="#d8d8d8" stroke-width="1" fill="none"/></svg>
<div style="left:15px;top:543px;width:497px;height:1px;background:#181818;"></div>
<div style="left:15px;top:556.4px;width:497px;height:1.2px;background:#181818;"></div>
<svg style="left:19.5px;top:547px;" width="10" height="7" viewBox="0 0 10 7"><path d="M0.4 3.5 Q5 -1.6 9.6 3.5 Q5 8.6 0.4 3.5Z" fill="#e6e6e6"/><circle cx="5" cy="3.5" r="1.7" fill="#2a2a2a"/></svg>
<svg style="left:30.5px;top:545.5px;" width="9" height="10" viewBox="0 0 9 10"><path d="M4.6 0.8 A4.2 4.2 0 0 0 4.6 9.2 Z" fill="#e0e0e0"/><path d="M5.6 1 A4.2 4.2 0 0 1 5.6 9" fill="none" stroke="#e0e0e0" stroke-width="1"/></svg>
<svg style="left:42.5px;top:547.5px;" width="6" height="6" viewBox="0 0 6 6"><circle cx="3" cy="3" r="2.3" fill="#e0e0e0"/></svg>
<svg style="left:52.5px;top:545px;" width="8" height="10" viewBox="0 0 8 10"><rect x="0.6" y="4.2" width="6.8" height="5" fill="#e0e0e0"/><path d="M2 4.2 V2.8 Q2 1 4 1 Q6 1 6 2.8 V4.2" stroke="#e0e0e0" stroke-width="1.1" fill="none"/><rect x="3.4" y="5.6" width="1.2" height="2" fill="#232323"/></svg>
<div style="left:65.5px;top:545.5px;width:1px;height:10px;background:#191919;"></div>
<svg style="left:75px;top:545px;" width="12" height="11" viewBox="0 0 12 11"><path d="M1 1 H5.6 L11 6.4 L6.4 10.4 L1 5 Z" fill="#d8d8d8"/><circle cx="3.2" cy="3.2" r="1" fill="#232323"/></svg>
<div style="left:88.5px;top:545.5px;width:1px;height:10px;background:#191919;"></div>
<span style="left:92.50px;top:548.05px;font-size:7.5px;line-height:7.5px;color:#a9a9a9;transform:scaleX(0.9000);transform-origin:left top;font-style:italic;">#</span>
<div style="left:113.5px;top:545.5px;width:1px;height:10px;background:#191919;"></div>
<span style="left:117.00px;top:547.40px;font-size:8.5px;line-height:8.5px;color:#b0b0b0;transform:scaleX(0.7697);transform-origin:left top;">Source Name</span>
<div style="left:313px;top:545.5px;width:1px;height:10px;background:#191919;"></div>
<svg style="left:316.8px;top:546.2px;" width="10" height="9" viewBox="0 0 10 9"><path d="M2.2 5.2 Q2.2 1 5 1 Q7.8 1 7.8 5.2 Z" fill="#d4d4d4"/><path d="M0.6 5.9 H9.4" stroke="#d4d4d4" stroke-width="1"/><path d="M3 6 V7.9 M5 6 V8.2 M7 6 V7.9" stroke="#d4d4d4" stroke-width=".95"/><path d="M5 1.6 V5.2" stroke="#2a2a2a" stroke-width=".9"/></svg>
<svg style="left:328.5px;top:546.3px;" width="9" height="9" viewBox="0 0 9 9"><circle cx="4.5" cy="4.5" r="1.8" fill="none" stroke="#e0e0e0" stroke-width="1.1"/><path d="M4.5 0.9 V2.1 M4.5 6.9 V8.1 M0.9 4.5 H2.1 M6.9 4.5 H8.1 M2 2 L2.8 2.8 M6.2 6.2 L7 7 M2 7 L2.8 6.2 M6.2 2.8 L7 2" stroke="#e0e0e0" stroke-width=".9"/></svg>
<svg style="left:339.5px;top:546px;" width="9" height="9" viewBox="0 0 9 9"><path d="M1 1 L8 8" stroke="#d6d6d6" stroke-width="1.2"/></svg>
<span style="left:350.5px;top:545.1999999999999px;font-size:10.5px;line-height:10.5px;color:#d6d6d6;font-style:italic;font-family:'Liberation Serif',serif;transform:scaleX(1.02);transform-origin:left top;letter-spacing:-.3px;opacity:.99">fx</span>
<svg style="left:361px;top:545.5px;" width="10" height="10" viewBox="0 0 10 10"><rect x="0.6" y="1" width="9" height="8.4" fill="#8a8a8a"/><rect x="2.2" y="0.6" width="7.4" height="6.8" fill="#c9c9c9"/><rect x="4.2" y="3.2" width="3.4" height="1.4" fill="#555"/></svg>
<svg style="left:372px;top:545.6px;" width="11" height="10" viewBox="0 0 11 10"><g transform="rotate(-38 5.5 5)"><rect x="0.8" y="2.2" width="9.4" height="5.6" rx="2.8" fill="#8f8f8f" stroke="#c9c9c9" stroke-width=".9"/><path d="M3 2.4 V7.6 M4.6 2.4 V7.6" stroke="#c9c9c9" stroke-width=".7"/></g></svg>
<svg style="left:384px;top:546px;" width="9" height="9" viewBox="0 0 9 9"><circle cx="4.5" cy="4.5" r="3.9" fill="#e8e8e8"/><path d="M1.8 7.2 A3.9 3.9 0 0 0 7.2 1.8 Q4 2.4 1.8 7.2Z" fill="#232323"/></svg>
<svg style="left:394.6px;top:546.6px;" width="8" height="8" viewBox="0 0 9 9"><path d="M4.5 0.8 L8 2.6 V6.4 L4.5 8.2 L1 6.4 V2.6 Z M1 2.6 L4.5 4.4 L8 2.6 M4.5 4.4 V8.2" fill="none" stroke="#d8d8d8" stroke-width="1"/></svg>
<div style="left:413.5px;top:545.5px;width:1px;height:10px;background:#191919;"></div>
<span style="left:418.00px;top:547.40px;font-size:8.5px;line-height:8.5px;color:#b0b0b0;transform:scaleX(0.7838);transform-origin:left top;">Parent &amp; Link</span>
<div style="left:499px;top:545.5px;width:1px;height:10px;background:#191919;"></div>
<div style="left:15px;top:557.5px;width:497px;height:148px;overflow:hidden">
<div style="left:0px;top:0.0px;width:496px;height:12.5px;background:#333333;"></div>
<div style="left:0px;top:11.6px;width:496px;height:0.9px;background:#2c2c2c;"></div>
<div style="left:4px;top:1.2px;width:9.4px;height:9.3px;background:#272727;"></div>
<svg style="left:4.3px;top:2.6px;" width="10" height="7" viewBox="0 0 10 7"><path d="M0.4 3.5 Q5 -1.6 9.6 3.5 Q5 8.6 0.4 3.5Z" fill="#e6e6e6"/><circle cx="5" cy="3.5" r="1.7" fill="#2a2a2a"/></svg>
<div style="left:26px;top:1.2px;width:9.3px;height:9.3px;background:#272727;"></div>
<div style="left:37.2px;top:1.2px;width:9.3px;height:9.3px;background:#272727;"></div>
<svg style="left:54.3px;top:2.4px;" width="5" height="8" viewBox="0 0 5 8"><path d="M1 1.3 L3.7 4 L1 6.7" stroke="#9c9c9c" stroke-width="1.05" fill="none"/></svg>
<div style="left:63.4px;top:1.3px;width:9px;height:9.2px;background:#c83c3c;box-shadow:0 1px 0 #1a1a1a;"></div>
<span style="left:78.40px;top:2.08px;font-size:9px;line-height:9px;color:#c9c9c9;font-weight:bold;transform:scaleX(0.8500);transform-origin:left top;">1</span>
<span style="left:101.40px;top:1.31px;font-size:10.5px;line-height:10.5px;color:#dadada;transform:scaleX(0.9500);transform-origin:left top;font-family:'Liberation Serif',serif;font-weight:bold;">T</span>
<span style="left:114.60px;top:2.08px;font-size:9px;line-height:9px;color:#d0d0d0;font-weight:bold;transform:scaleX(0.8607);transform-origin:left top;">YOU CAN DO ALL OF THAT!</span>
<div style="left:301.8px;top:1.2px;width:9.6px;height:9.3px;background:#272727;"></div>
<svg style="left:301.6px;top:1.6px;" width="10" height="9" viewBox="0 0 10 9"><path d="M2.2 5.2 Q2.2 1 5 1 Q7.8 1 7.8 5.2 Z" fill="#d4d4d4"/><path d="M0.6 5.9 H9.4" stroke="#d4d4d4" stroke-width="1"/><path d="M3 6 V7.9 M5 6 V8.2 M7 6 V7.9" stroke="#d4d4d4" stroke-width=".95"/><path d="M5 1.6 V5.2" stroke="#2a2a2a" stroke-width=".9"/></svg>
<div style="left:313px;top:1.2px;width:9.3px;height:9.3px;background:#272727;"></div>
<svg style="left:313.2px;top:1.4px;" width="9" height="9" viewBox="0 0 9 9"><circle cx="4.5" cy="4.5" r="1.8" fill="none" stroke="#6e6e6e" stroke-width="1.1"/><path d="M4.5 0.9 V2.1 M4.5 6.9 V8.1 M0.9 4.5 H2.1 M6.9 4.5 H8.1 M2 2 L2.8 2.8 M6.2 6.2 L7 7 M2 7 L2.8 6.2 M6.2 2.8 L7 2" stroke="#6e6e6e" stroke-width=".9"/></svg>
<div style="left:323.7px;top:1.2px;width:9.3px;height:9.3px;background:#272727;"></div>
<svg style="left:324px;top:1.4px;" width="9" height="9" viewBox="0 0 9 9"><path d="M1 8 L8 1" stroke="#d6d6d6" stroke-width="1.2"/></svg>
<div style="left:334.7px;top:1.2px;width:9.7px;height:9.3px;background:#272727;"></div>
<span style="left:335.6px;top:0.19999999999999996px;font-size:10.5px;line-height:10.5px;color:#d6d6d6;font-style:italic;font-family:'Liberation Serif',serif;transform:scaleX(1.02);transform-origin:left top;letter-spacing:-.3px;opacity:.99">fx</span>
<div style="left:356.9px;top:1.2px;width:10px;height:9.3px;background:#272727;"></div>
<svg style="left:356.6px;top:0.9px;" width="11" height="10" viewBox="0 0 11 10"><g transform="rotate(-38 5.5 5)"><rect x="0.8" y="2.2" width="9.4" height="5.6" rx="2.8" fill="#8f8f8f" stroke="#c9c9c9" stroke-width=".9"/><path d="M3 2.4 V7.6 M4.6 2.4 V7.6" stroke="#c9c9c9" stroke-width=".7"/></g></svg>
<div style="left:368px;top:1.2px;width:9.3px;height:9.3px;background:#272727;"></div>
<div style="left:379px;top:1.2px;width:9.5px;height:9.3px;background:#272727;"></div>
<svg style="left:402.4px;top:0.8px;" width="11" height="11" viewBox="0 0 11 11"><path d="M5.6 5.6 Q4.4 4.8 5 3.8 Q6.4 2.6 7.4 4.2 Q8.2 6.8 5.4 7.6 Q2.4 7.6 2.4 4.6 Q2.8 1.2 6 1.2 Q9.8 1.6 9.8 5.4 Q9.4 9 5.8 9.8" fill="none" stroke="#b4b4b4" stroke-width="1.05"/></svg>
<div style="left:416.5px;top:1.2px;width:64.5px;height:10.2px;background:#1f1f1f;"></div>
<span style="left:421.80px;top:2.08px;font-size:9px;line-height:9px;color:#d0d0d0;transform:scaleX(0.8831);transform-origin:left top;">None</span>
<svg style="left:470.8px;top:3.4px;" width="8" height="5" viewBox="0 0 8 5"><path d="M1 1 L4 4 L7 1" stroke="#b0b0b0" stroke-width="1.1" fill="none"/></svg>
<div style="left:0px;top:12.5px;width:496px;height:12.5px;background:#333333;"></div>
<div style="left:0px;top:24.1px;width:496px;height:0.9px;background:#2c2c2c;"></div>
<div style="left:4px;top:13.7px;width:9.4px;height:9.3px;background:#272727;"></div>
<svg style="left:4.3px;top:15.1px;" width="10" height="7" viewBox="0 0 10 7"><path d="M0.4 3.5 Q5 -1.6 9.6 3.5 Q5 8.6 0.4 3.5Z" fill="#e6e6e6"/><circle cx="5" cy="3.5" r="1.7" fill="#2a2a2a"/></svg>
<div style="left:26px;top:13.7px;width:9.3px;height:9.3px;background:#272727;"></div>
<div style="left:37.2px;top:13.7px;width:9.3px;height:9.3px;background:#272727;"></div>
<svg style="left:54.3px;top:14.9px;" width="5" height="8" viewBox="0 0 5 8"><path d="M1 1.3 L3.7 4 L1 6.7" stroke="#9c9c9c" stroke-width="1.05" fill="none"/></svg>
<div style="left:63.4px;top:13.8px;width:9px;height:9.2px;background:#c83c3c;box-shadow:0 1px 0 #1a1a1a;"></div>
<span style="left:78.40px;top:14.58px;font-size:9px;line-height:9px;color:#c9c9c9;font-weight:bold;transform:scaleX(0.8500);transform-origin:left top;">2</span>
<span style="left:101.40px;top:13.81px;font-size:10.5px;line-height:10.5px;color:#dadada;transform:scaleX(0.9500);transform-origin:left top;font-family:'Liberation Serif',serif;font-weight:bold;">T</span>
<span style="left:114.60px;top:14.58px;font-size:9px;line-height:9px;color:#d0d0d0;font-weight:bold;transform:scaleX(0.8233);transform-origin:left top;">GUESS WHAT?</span>
<div style="left:301.8px;top:13.7px;width:9.6px;height:9.3px;background:#272727;"></div>
<svg style="left:301.6px;top:14.1px;" width="10" height="9" viewBox="0 0 10 9"><path d="M2.2 5.2 Q2.2 1 5 1 Q7.8 1 7.8 5.2 Z" fill="#d4d4d4"/><path d="M0.6 5.9 H9.4" stroke="#d4d4d4" stroke-width="1"/><path d="M3 6 V7.9 M5 6 V8.2 M7 6 V7.9" stroke="#d4d4d4" stroke-width=".95"/><path d="M5 1.6 V5.2" stroke="#2a2a2a" stroke-width=".9"/></svg>
<div style="left:313px;top:13.7px;width:9.3px;height:9.3px;background:#272727;"></div>
<svg style="left:313.2px;top:13.9px;" width="9" height="9" viewBox="0 0 9 9"><circle cx="4.5" cy="4.5" r="1.8" fill="none" stroke="#6e6e6e" stroke-width="1.1"/><path d="M4.5 0.9 V2.1 M4.5 6.9 V8.1 M0.9 4.5 H2.1 M6.9 4.5 H8.1 M2 2 L2.8 2.8 M6.2 6.2 L7 7 M2 7 L2.8 6.2 M6.2 2.8 L7 2" stroke="#6e6e6e" stroke-width=".9"/></svg>
<div style="left:323.7px;top:13.7px;width:9.3px;height:9.3px;background:#272727;"></div>
<svg style="left:324px;top:13.9px;" width="9" height="9" viewBox="0 0 9 9"><path d="M1 8 L8 1" stroke="#d6d6d6" stroke-width="1.2"/></svg>
<div style="left:334.7px;top:13.7px;width:9.7px;height:9.3px;background:#272727;"></div>
<span style="left:335.6px;top:12.700000000000001px;font-size:10.5px;line-height:10.5px;color:#d6d6d6;font-style:italic;font-family:'Liberation Serif',serif;transform:scaleX(1.02);transform-origin:left top;letter-spacing:-.3px;opacity:.99">fx</span>
<div style="left:356.9px;top:13.7px;width:10px;height:9.3px;background:#272727;"></div>
<svg style="left:356.6px;top:13.4px;" width="11" height="10" viewBox="0 0 11 10"><g transform="rotate(-38 5.5 5)"><rect x="0.8" y="2.2" width="9.4" height="5.6" rx="2.8" fill="#8f8f8f" stroke="#c9c9c9" stroke-width=".9"/><path d="M3 2.4 V7.6 M4.6 2.4 V7.6" stroke="#c9c9c9" stroke-width=".7"/></g></svg>
<div style="left:368px;top:13.7px;width:9.3px;height:9.3px;background:#272727;"></div>
<div style="left:379px;top:13.7px;width:9.5px;height:9.3px;background:#272727;"></div>
<svg style="left:402.4px;top:13.3px;" width="11" height="11" viewBox="0 0 11 11"><path d="M5.6 5.6 Q4.4 4.8 5 3.8 Q6.4 2.6 7.4 4.2 Q8.2 6.8 5.4 7.6 Q2.4 7.6 2.4 4.6 Q2.8 1.2 6 1.2 Q9.8 1.6 9.8 5.4 Q9.4 9 5.8 9.8" fill="none" stroke="#b4b4b4" stroke-width="1.05"/></svg>
<div style="left:416.5px;top:13.7px;width:64.5px;height:10.2px;background:#1f1f1f;"></div>
<span style="left:421.80px;top:14.58px;font-size:9px;line-height:9px;color:#d0d0d0;transform:scaleX(0.8831);transform-origin:left top;">None</span>
<svg style="left:470.8px;top:15.9px;" width="8" height="5" viewBox="0 0 8 5"><path d="M1 1 L4 4 L7 1" stroke="#b0b0b0" stroke-width="1.1" fill="none"/></svg>
<div style="left:0px;top:25.0px;width:496px;height:12.5px;background:#333333;"></div>
<div style="left:0px;top:36.6px;width:496px;height:0.9px;background:#2c2c2c;"></div>
<div style="left:4px;top:26.2px;width:9.4px;height:9.3px;background:#272727;"></div>
<svg style="left:4.3px;top:27.6px;" width="10" height="7" viewBox="0 0 10 7"><path d="M0.4 3.5 Q5 -1.6 9.6 3.5 Q5 8.6 0.4 3.5Z" fill="#e6e6e6"/><circle cx="5" cy="3.5" r="1.7" fill="#2a2a2a"/></svg>
<div style="left:26px;top:26.2px;width:9.3px;height:9.3px;background:#272727;"></div>
<div style="left:37.2px;top:26.2px;width:9.3px;height:9.3px;background:#272727;"></div>
<svg style="left:54.3px;top:27.4px;" width="5" height="8" viewBox="0 0 5 8"><path d="M1 1.3 L3.7 4 L1 6.7" stroke="#9c9c9c" stroke-width="1.05" fill="none"/></svg>
<div style="left:63.4px;top:26.3px;width:9px;height:9.2px;background:#c83c3c;box-shadow:0 1px 0 #1a1a1a;"></div>
<span style="left:78.40px;top:27.08px;font-size:9px;line-height:9px;color:#c9c9c9;font-weight:bold;transform:scaleX(0.8500);transform-origin:left top;">3</span>
<div style="left:100.5px;top:26.4px;width:9.4px;height:9.4px;background:#1a9bf5;box-shadow:0 0 0 .6px #0b4d82;"></div>
<span style="left:114.60px;top:27.08px;font-size:9px;line-height:9px;color:#d0d0d0;font-weight:bold;transform:scaleX(0.8711);transform-origin:left top;">Royal Blue Solid 1</span>
<div style="left:301.8px;top:26.2px;width:9.6px;height:9.3px;background:#272727;"></div>
<svg style="left:301.6px;top:26.6px;" width="10" height="9" viewBox="0 0 10 9"><path d="M2.2 5.2 Q2.2 1 5 1 Q7.8 1 7.8 5.2 Z" fill="#d4d4d4"/><path d="M0.6 5.9 H9.4" stroke="#d4d4d4" stroke-width="1"/><path d="M3 6 V7.9 M5 6 V8.2 M7 6 V7.9" stroke="#d4d4d4" stroke-width=".95"/><path d="M5 1.6 V5.2" stroke="#2a2a2a" stroke-width=".9"/></svg>
<div style="left:313px;top:26.2px;width:9.3px;height:9.3px;background:#272727;"></div>
<div style="left:323.7px;top:26.2px;width:9.3px;height:9.3px;background:#272727;"></div>
<svg style="left:324px;top:26.4px;" width="9" height="9" viewBox="0 0 9 9"><path d="M1 8 L8 1" stroke="#d6d6d6" stroke-width="1.2"/></svg>
<div style="left:356.9px;top:26.2px;width:10px;height:9.3px;background:#272727;"></div>
<div style="left:368px;top:26.2px;width:9.3px;height:9.3px;background:#272727;"></div>
<div style="left:379px;top:26.2px;width:9.5px;height:9.3px;background:#272727;"></div>
<svg style="left:402.4px;top:25.8px;" width="11" height="11" viewBox="0 0 11 11"><path d="M5.6 5.6 Q4.4 4.8 5 3.8 Q6.4 2.6 7.4 4.2 Q8.2 6.8 5.4 7.6 Q2.4 7.6 2.4 4.6 Q2.8 1.2 6 1.2 Q9.8 1.6 9.8 5.4 Q9.4 9 5.8 9.8" fill="none" stroke="#b4b4b4" stroke-width="1.05"/></svg>
<div style="left:416.5px;top:26.2px;width:64.5px;height:10.2px;background:#1f1f1f;"></div>
<span style="left:421.80px;top:27.08px;font-size:9px;line-height:9px;color:#d0d0d0;transform:scaleX(0.8831);transform-origin:left top;">None</span>
<svg style="left:470.8px;top:28.4px;" width="8" height="5" viewBox="0 0 8 5"><path d="M1 1 L4 4 L7 1" stroke="#b0b0b0" stroke-width="1.1" fill="none"/></svg>
<div style="left:0px;top:37.5px;width:496px;height:12.5px;background:#333333;"></div>
<div style="left:0px;top:49.1px;width:496px;height:0.9px;background:#2c2c2c;"></div>
<div style="left:4px;top:38.7px;width:9.4px;height:9.3px;background:#272727;"></div>
<svg style="left:4.3px;top:40.1px;" width="10" height="7" viewBox="0 0 10 7"><path d="M0.4 3.5 Q5 -1.6 9.6 3.5 Q5 8.6 0.4 3.5Z" fill="#e6e6e6"/><circle cx="5" cy="3.5" r="1.7" fill="#2a2a2a"/></svg>
<div style="left:26px;top:38.7px;width:9.3px;height:9.3px;background:#272727;"></div>
<div style="left:37.2px;top:38.7px;width:9.3px;height:9.3px;background:#272727;"></div>
<svg style="left:54.3px;top:39.9px;" width="5" height="8" viewBox="0 0 5 8"><path d="M1 1.3 L3.7 4 L1 6.7" stroke="#9c9c9c" stroke-width="1.05" fill="none"/></svg>
<div style="left:63.4px;top:38.8px;width:9px;height:9.2px;background:#c83c3c;box-shadow:0 1px 0 #1a1a1a;"></div>
<span style="left:78.40px;top:39.58px;font-size:9px;line-height:9px;color:#c9c9c9;font-weight:bold;transform:scaleX(0.8500);transform-origin:left top;">4</span>
<span style="left:101.40px;top:38.81px;font-size:10.5px;line-height:10.5px;color:#dadada;transform:scaleX(0.9500);transform-origin:left top;font-family:'Liberation Serif',serif;font-weight:bold;">T</span>
<span style="left:114.60px;top:39.58px;font-size:9px;line-height:9px;color:#d0d0d0;font-weight:bold;transform:scaleX(0.8630);transform-origin:left top;">INTRODUCING</span>
<div style="left:301.8px;top:38.7px;width:9.6px;height:9.3px;background:#272727;"></div>
<svg style="left:301.6px;top:39.1px;" width="10" height="9" viewBox="0 0 10 9"><path d="M2.2 5.2 Q2.2 1 5 1 Q7.8 1 7.8 5.2 Z" fill="#d4d4d4"/><path d="M0.6 5.9 H9.4" stroke="#d4d4d4" stroke-width="1"/><path d="M3 6 V7.9 M5 6 V8.2 M7 6 V7.9" stroke="#d4d4d4" stroke-width=".95"/><path d="M5 1.6 V5.2" stroke="#2a2a2a" stroke-width=".9"/></svg>
<div style="left:313px;top:38.7px;width:9.3px;height:9.3px;background:#272727;"></div>
<svg style="left:313.2px;top:38.9px;" width="9" height="9" viewBox="0 0 9 9"><circle cx="4.5" cy="4.5" r="1.8" fill="none" stroke="#6e6e6e" stroke-width="1.1"/><path d="M4.5 0.9 V2.1 M4.5 6.9 V8.1 M0.9 4.5 H2.1 M6.9 4.5 H8.1 M2 2 L2.8 2.8 M6.2 6.2 L7 7 M2 7 L2.8 6.2 M6.2 2.8 L7 2" stroke="#6e6e6e" stroke-width=".9"/></svg>
<div style="left:323.7px;top:38.7px;width:9.3px;height:9.3px;background:#272727;"></div>
<svg style="left:324px;top:38.9px;" width="9" height="9" viewBox="0 0 9 9"><path d="M1 8 L8 1" stroke="#d6d6d6" stroke-width="1.2"/></svg>
<div style="left:334.7px;top:38.7px;width:9.7px;height:9.3px;background:#272727;"></div>
<span style="left:335.6px;top:37.699999999999996px;font-size:10.5px;line-height:10.5px;color:#d6d6d6;font-style:italic;font-family:'Liberation Serif',serif;transform:scaleX(1.02);transform-origin:left top;letter-spacing:-.3px;opacity:.99">fx</span>
<div style="left:356.9px;top:38.7px;width:10px;height:9.3px;background:#272727;"></div>
<svg style="left:356.6px;top:38.4px;" width="11" height="10" viewBox="0 0 11 10"><g transform="rotate(-38 5.5 5)"><rect x="0.8" y="2.2" width="9.4" height="5.6" rx="2.8" fill="#8f8f8f" stroke="#c9c9c9" stroke-width=".9"/><path d="M3 2.4 V7.6 M4.6 2.4 V7.6" stroke="#c9c9c9" stroke-width=".7"/></g></svg>
<div style="left:368px;top:38.7px;width:9.3px;height:9.3px;background:#272727;"></div>
<div style="left:379px;top:38.7px;width:9.5px;height:9.3px;background:#272727;"></div>
<svg style="left:402.4px;top:38.3px;" width="11" height="11" viewBox="0 0 11 11"><path d="M5.6 5.6 Q4.4 4.8 5 3.8 Q6.4 2.6 7.4 4.2 Q8.2 6.8 5.4 7.6 Q2.4 7.6 2.4 4.6 Q2.8 1.2 6 1.2 Q9.8 1.6 9.8 5.4 Q9.4 9 5.8 9.8" fill="none" stroke="#b4b4b4" stroke-width="1.05"/></svg>
<div style="left:416.5px;top:38.7px;width:64.5px;height:10.2px;background:#1f1f1f;"></div>
<span style="left:421.80px;top:39.58px;font-size:9px;line-height:9px;color:#d0d0d0;transform:scaleX(0.8831);transform-origin:left top;">None</span>
<svg style="left:470.8px;top:40.9px;" width="8" height="5" viewBox="0 0 8 5"><path d="M1 1 L4 4 L7 1" stroke="#b0b0b0" stroke-width="1.1" fill="none"/></svg>
<div style="left:0px;top:50.0px;width:496px;height:12.5px;background:#333333;"></div>
<div style="left:0px;top:61.6px;width:496px;height:0.9px;background:#2c2c2c;"></div>
<div style="left:4px;top:51.2px;width:9.4px;height:9.3px;background:#272727;"></div>
<svg style="left:4.3px;top:52.6px;" width="10" height="7" viewBox="0 0 10 7"><path d="M0.4 3.5 Q5 -1.6 9.6 3.5 Q5 8.6 0.4 3.5Z" fill="#e6e6e6"/><circle cx="5" cy="3.5" r="1.7" fill="#2a2a2a"/></svg>
<div style="left:26px;top:51.2px;width:9.3px;height:9.3px;background:#272727;"></div>
<div style="left:37.2px;top:51.2px;width:9.3px;height:9.3px;background:#272727;"></div>
<svg style="left:54.3px;top:52.4px;" width="5" height="8" viewBox="0 0 5 8"><path d="M1 1.3 L3.7 4 L1 6.7" stroke="#9c9c9c" stroke-width="1.05" fill="none"/></svg>
<div style="left:63.4px;top:51.3px;width:9px;height:9.2px;background:#6f83e6;box-shadow:0 1px 0 #1a1a1a;"></div>
<span style="left:78.40px;top:52.08px;font-size:9px;line-height:9px;color:#c9c9c9;font-weight:bold;transform:scaleX(0.8500);transform-origin:left top;">5</span>
<svg style="left:101px;top:51.6px;" width="9" height="9" viewBox="0 0 9 9"><path d="M4.5 0.3 L5.7 3.3 L8.9 3.5 L6.4 5.5 L7.3 8.7 L4.5 6.9 L1.7 8.7 L2.6 5.5 L0.1 3.5 L3.3 3.3 Z" fill="#e0e0e0"/></svg>
<span style="left:114.60px;top:52.08px;font-size:9px;line-height:9px;color:#d0d0d0;font-weight:bold;transform:scaleX(0.8651);transform-origin:left top;">Shape Layer 1</span>
<div style="left:301.8px;top:51.2px;width:9.6px;height:9.3px;background:#272727;"></div>
<svg style="left:301.6px;top:51.6px;" width="10" height="9" viewBox="0 0 10 9"><path d="M2.2 5.2 Q2.2 1 5 1 Q7.8 1 7.8 5.2 Z" fill="#d4d4d4"/><path d="M0.6 5.9 H9.4" stroke="#d4d4d4" stroke-width="1"/><path d="M3 6 V7.9 M5 6 V8.2 M7 6 V7.9" stroke="#d4d4d4" stroke-width=".95"/><path d="M5 1.6 V5.2" stroke="#2a2a2a" stroke-width=".9"/></svg>
<div style="left:313px;top:51.2px;width:9.3px;height:9.3px;background:#272727;"></div>
<svg style="left:313.2px;top:51.4px;" width="9" height="9" viewBox="0 0 9 9"><circle cx="4.5" cy="4.5" r="1.8" fill="none" stroke="#6e6e6e" stroke-width="1.1"/><path d="M4.5 0.9 V2.1 M4.5 6.9 V8.1 M0.9 4.5 H2.1 M6.9 4.5 H8.1 M2 2 L2.8 2.8 M6.2 6.2 L7 7 M2 7 L2.8 6.2 M6.2 2.8 L7 2" stroke="#6e6e6e" stroke-width=".9"/></svg>
<div style="left:323.7px;top:51.2px;width:9.3px;height:9.3px;background:#272727;"></div>
<svg style="left:324px;top:51.4px;" width="9" height="9" viewBox="0 0 9 9"><path d="M1 8 L8 1" stroke="#d6d6d6" stroke-width="1.2"/></svg>
<div style="left:356.9px;top:51.2px;width:10px;height:9.3px;background:#272727;"></div>
<div style="left:368px;top:51.2px;width:9.3px;height:9.3px;background:#272727;"></div>
<div style="left:379px;top:51.2px;width:9.5px;height:9.3px;background:#272727;"></div>
<svg style="left:402.4px;top:50.8px;" width="11" height="11" viewBox="0 0 11 11"><path d="M5.6 5.6 Q4.4 4.8 5 3.8 Q6.4 2.6 7.4 4.2 Q8.2 6.8 5.4 7.6 Q2.4 7.6 2.4 4.6 Q2.8 1.2 6 1.2 Q9.8 1.6 9.8 5.4 Q9.4 9 5.8 9.8" fill="none" stroke="#b4b4b4" stroke-width="1.05"/></svg>
<div style="left:416.5px;top:51.2px;width:64.5px;height:10.2px;background:#1f1f1f;"></div>
<span style="left:421.80px;top:52.08px;font-size:9px;line-height:9px;color:#d0d0d0;transform:scaleX(0.8831);transform-origin:left top;">None</span>
<svg style="left:470.8px;top:53.4px;" width="8" height="5" viewBox="0 0 8 5"><path d="M1 1 L4 4 L7 1" stroke="#b0b0b0" stroke-width="1.1" fill="none"/></svg>
<div style="left:0px;top:62.5px;width:496px;height:12.5px;background:#333333;"></div>
<div style="left:0px;top:74.1px;width:496px;height:0.9px;background:#2c2c2c;"></div>
<div style="left:4px;top:63.7px;width:9.4px;height:9.3px;background:#272727;"></div>
<svg style="left:4.3px;top:65.1px;" width="10" height="7" viewBox="0 0 10 7"><path d="M0.4 3.5 Q5 -1.6 9.6 3.5 Q5 8.6 0.4 3.5Z" fill="#e6e6e6"/><circle cx="5" cy="3.5" r="1.7" fill="#2a2a2a"/></svg>
<div style="left:26px;top:63.7px;width:9.3px;height:9.3px;background:#272727;"></div>
<div style="left:37.2px;top:63.7px;width:9.3px;height:9.3px;background:#272727;"></div>
<svg style="left:54.3px;top:64.9px;" width="5" height="8" viewBox="0 0 5 8"><path d="M1 1.3 L3.7 4 L1 6.7" stroke="#9c9c9c" stroke-width="1.05" fill="none"/></svg>
<div style="left:63.4px;top:63.8px;width:9px;height:9.2px;background:#6f83e6;box-shadow:0 1px 0 #1a1a1a;"></div>
<span style="left:78.40px;top:64.58px;font-size:9px;line-height:9px;color:#c9c9c9;font-weight:bold;transform:scaleX(0.8500);transform-origin:left top;">6</span>
<svg style="left:101px;top:64.1px;" width="9" height="9" viewBox="0 0 9 9"><path d="M4.5 0.3 L5.7 3.3 L8.9 3.5 L6.4 5.5 L7.3 8.7 L4.5 6.9 L1.7 8.7 L2.6 5.5 L0.1 3.5 L3.3 3.3 Z" fill="#e0e0e0"/></svg>
<span style="left:114.60px;top:64.58px;font-size:9px;line-height:9px;color:#d0d0d0;font-weight:bold;transform:scaleX(0.8651);transform-origin:left top;">Shape Layer 2</span>
<div style="left:301.8px;top:63.7px;width:9.6px;height:9.3px;background:#272727;"></div>
<svg style="left:301.6px;top:64.1px;" width="10" height="9" viewBox="0 0 10 9"><path d="M2.2 5.2 Q2.2 1 5 1 Q7.8 1 7.8 5.2 Z" fill="#d4d4d4"/><path d="M0.6 5.9 H9.4" stroke="#d4d4d4" stroke-width="1"/><path d="M3 6 V7.9 M5 6 V8.2 M7 6 V7.9" stroke="#d4d4d4" stroke-width=".95"/><path d="M5 1.6 V5.2" stroke="#2a2a2a" stroke-width=".9"/></svg>
<div style="left:313px;top:63.7px;width:9.3px;height:9.3px;background:#272727;"></div>
<svg style="left:313.2px;top:63.9px;" width="9" height="9" viewBox="0 0 9 9"><circle cx="4.5" cy="4.5" r="1.8" fill="none" stroke="#6e6e6e" stroke-width="1.1"/><path d="M4.5 0.9 V2.1 M4.5 6.9 V8.1 M0.9 4.5 H2.1 M6.9 4.5 H8.1 M2 2 L2.8 2.8 M6.2 6.2 L7 7 M2 7 L2.8 6.2 M6.2 2.8 L7 2" stroke="#6e6e6e" stroke-width=".9"/></svg>
<div style="left:323.7px;top:63.7px;width:9.3px;height:9.3px;background:#272727;"></div>
<svg style="left:324px;top:63.9px;" width="9" height="9" viewBox="0 0 9 9"><path d="M1 8 L8 1" stroke="#d6d6d6" stroke-width="1.2"/></svg>
<div style="left:356.9px;top:63.7px;width:10px;height:9.3px;background:#272727;"></div>
<div style="left:368px;top:63.7px;width:9.3px;height:9.3px;background:#272727;"></div>
<div style="left:379px;top:63.7px;width:9.5px;height:9.3px;background:#272727;"></div>
<svg style="left:402.4px;top:63.3px;" width="11" height="11" viewBox="0 0 11 11"><path d="M5.6 5.6 Q4.4 4.8 5 3.8 Q6.4 2.6 7.4 4.2 Q8.2 6.8 5.4 7.6 Q2.4 7.6 2.4 4.6 Q2.8 1.2 6 1.2 Q9.8 1.6 9.8 5.4 Q9.4 9 5.8 9.8" fill="none" stroke="#b4b4b4" stroke-width="1.05"/></svg>
<div style="left:416.5px;top:63.7px;width:64.5px;height:10.2px;background:#1f1f1f;"></div>
<span style="left:421.80px;top:64.58px;font-size:9px;line-height:9px;color:#d0d0d0;transform:scaleX(0.8831);transform-origin:left top;">None</span>
<svg style="left:470.8px;top:65.9px;" width="8" height="5" viewBox="0 0 8 5"><path d="M1 1 L4 4 L7 1" stroke="#b0b0b0" stroke-width="1.1" fill="none"/></svg>
<div style="left:0px;top:75.0px;width:496px;height:12.5px;background:#333333;"></div>
<div style="left:0px;top:86.6px;width:496px;height:0.9px;background:#2c2c2c;"></div>
<div style="left:4px;top:76.2px;width:9.4px;height:9.3px;background:#272727;"></div>
<svg style="left:4.3px;top:77.6px;" width="10" height="7" viewBox="0 0 10 7"><path d="M0.4 3.5 Q5 -1.6 9.6 3.5 Q5 8.6 0.4 3.5Z" fill="#e6e6e6"/><circle cx="5" cy="3.5" r="1.7" fill="#2a2a2a"/></svg>
<div style="left:26px;top:76.2px;width:9.3px;height:9.3px;background:#272727;"></div>
<div style="left:37.2px;top:76.2px;width:9.3px;height:9.3px;background:#272727;"></div>
<svg style="left:54.3px;top:77.4px;" width="5" height="8" viewBox="0 0 5 8"><path d="M1 1.3 L3.7 4 L1 6.7" stroke="#9c9c9c" stroke-width="1.05" fill="none"/></svg>
<div style="left:63.4px;top:76.3px;width:9px;height:9.2px;background:#c8b18a;box-shadow:0 1px 0 #1a1a1a;"></div>
<span style="left:78.40px;top:77.08px;font-size:9px;line-height:9px;color:#c9c9c9;font-weight:bold;transform:scaleX(0.8500);transform-origin:left top;">7</span>
<svg style="left:99.4px;top:75.9px;" width="13" height="11" viewBox="0 0 13 11"><rect x="0.5" y="0.5" width="12" height="10" rx="1" fill="#bfbfbf"/><rect x="2" y="2" width="9" height="7" fill="#6f6f6f"/><circle cx="5" cy="4.6" r="1.7" fill="#d33"/><circle cx="8" cy="4.6" r="1.7" fill="#2b6fd6"/><circle cx="6.4" cy="6.8" r="1.7" fill="#2a9b3a"/></svg>
<span style="left:114.60px;top:77.08px;font-size:9px;line-height:9px;color:#d0d0d0;font-weight:bold;transform:scaleX(0.8830);transform-origin:left top;">badgepass-one_logo_stacked</span>
<div style="left:301.8px;top:76.2px;width:9.6px;height:9.3px;background:#272727;"></div>
<svg style="left:301.6px;top:76.6px;" width="10" height="9" viewBox="0 0 10 9"><path d="M2.2 5.2 Q2.2 1 5 1 Q7.8 1 7.8 5.2 Z" fill="#d4d4d4"/><path d="M0.6 5.9 H9.4" stroke="#d4d4d4" stroke-width="1"/><path d="M3 6 V7.9 M5 6 V8.2 M7 6 V7.9" stroke="#d4d4d4" stroke-width=".95"/><path d="M5 1.6 V5.2" stroke="#2a2a2a" stroke-width=".9"/></svg>
<div style="left:313px;top:76.2px;width:9.3px;height:9.3px;background:#272727;"></div>
<div style="left:323.7px;top:76.2px;width:9.3px;height:9.3px;background:#272727;"></div>
<svg style="left:324px;top:76.4px;" width="9" height="9" viewBox="0 0 9 9"><path d="M1 8 L8 1" stroke="#d6d6d6" stroke-width="1.2"/></svg>
<div style="left:356.9px;top:76.2px;width:10px;height:9.3px;background:#272727;"></div>
<div style="left:368px;top:76.2px;width:9.3px;height:9.3px;background:#272727;"></div>
<div style="left:379px;top:76.2px;width:9.5px;height:9.3px;background:#272727;"></div>
<svg style="left:402.4px;top:75.8px;" width="11" height="11" viewBox="0 0 11 11"><path d="M5.6 5.6 Q4.4 4.8 5 3.8 Q6.4 2.6 7.4 4.2 Q8.2 6.8 5.4 7.6 Q2.4 7.6 2.4 4.6 Q2.8 1.2 6 1.2 Q9.8 1.6 9.8 5.4 Q9.4 9 5.8 9.8" fill="none" stroke="#b4b4b4" stroke-width="1.05"/></svg>
<div style="left:416.5px;top:76.2px;width:64.5px;height:10.2px;background:#1f1f1f;"></div>
<span style="left:421.80px;top:77.08px;font-size:9px;line-height:9px;color:#d0d0d0;transform:scaleX(0.8831);transform-origin:left top;">None</span>
<svg style="left:470.8px;top:78.4px;" width="8" height="5" viewBox="0 0 8 5"><path d="M1 1 L4 4 L7 1" stroke="#b0b0b0" stroke-width="1.1" fill="none"/></svg>
<div style="left:0px;top:87.5px;width:496px;height:12.5px;background:#333333;"></div>
<div style="left:0px;top:99.1px;width:496px;height:0.9px;background:#2c2c2c;"></div>
<div style="left:4px;top:88.7px;width:9.4px;height:9.3px;background:#272727;"></div>
<div style="left:37.2px;top:88.7px;width:9.3px;height:9.3px;background:#272727;"></div>
<svg style="left:54.3px;top:89.9px;" width="5" height="8" viewBox="0 0 5 8"><path d="M1 1.3 L3.7 4 L1 6.7" stroke="#9c9c9c" stroke-width="1.05" fill="none"/></svg>
<div style="left:63.4px;top:88.8px;width:9px;height:9.2px;background:#c8b18a;box-shadow:0 1px 0 #1a1a1a;"></div>
<span style="left:78.40px;top:89.58px;font-size:9px;line-height:9px;color:#c9c9c9;font-weight:bold;transform:scaleX(0.8500);transform-origin:left top;">8</span>
<svg style="left:99.4px;top:88.4px;" width="13" height="11" viewBox="0 0 13 11"><rect x="0.5" y="0.5" width="12" height="10" rx="1" fill="#bfbfbf"/><rect x="2" y="2" width="9" height="7" fill="#6f6f6f"/><circle cx="5" cy="4.6" r="1.7" fill="#d33"/><circle cx="8" cy="4.6" r="1.7" fill="#2b6fd6"/><circle cx="6.4" cy="6.8" r="1.7" fill="#2a9b3a"/></svg>
<span style="left:114.60px;top:89.58px;font-size:9px;line-height:9px;color:#d0d0d0;font-weight:bold;transform:scaleX(0.8843);transform-origin:left top;">badgepass-one_logo</span>
<div style="left:301.8px;top:88.7px;width:9.6px;height:9.3px;background:#272727;"></div>
<svg style="left:301.6px;top:89.1px;" width="10" height="9" viewBox="0 0 10 9"><path d="M2.2 5.2 Q2.2 1 5 1 Q7.8 1 7.8 5.2 Z" fill="#d4d4d4"/><path d="M0.6 5.9 H9.4" stroke="#d4d4d4" stroke-width="1"/><path d="M3 6 V7.9 M5 6 V8.2 M7 6 V7.9" stroke="#d4d4d4" stroke-width=".95"/><path d="M5 1.6 V5.2" stroke="#2a2a2a" stroke-width=".9"/></svg>
<div style="left:313px;top:88.7px;width:9.3px;height:9.3px;background:#272727;"></div>
<div style="left:323.7px;top:88.7px;width:9.3px;height:9.3px;background:#272727;"></div>
<svg style="left:324px;top:88.9px;" width="9" height="9" viewBox="0 0 9 9"><path d="M1 8 L8 1" stroke="#d6d6d6" stroke-width="1.2"/></svg>
<div style="left:356.9px;top:88.7px;width:10px;height:9.3px;background:#272727;"></div>
<div style="left:368px;top:88.7px;width:9.3px;height:9.3px;background:#272727;"></div>
<div style="left:379px;top:88.7px;width:9.5px;height:9.3px;background:#272727;"></div>
<svg style="left:402.4px;top:88.3px;" width="11" height="11" viewBox="0 0 11 11"><path d="M5.6 5.6 Q4.4 4.8 5 3.8 Q6.4 2.6 7.4 4.2 Q8.2 6.8 5.4 7.6 Q2.4 7.6 2.4 4.6 Q2.8 1.2 6 1.2 Q9.8 1.6 9.8 5.4 Q9.4 9 5.8 9.8" fill="none" stroke="#b4b4b4" stroke-width="1.05"/></svg>
<div style="left:416.5px;top:88.7px;width:64.5px;height:10.2px;background:#1f1f1f;"></div>
<span style="left:421.80px;top:89.58px;font-size:9px;line-height:9px;color:#d0d0d0;transform:scaleX(0.8831);transform-origin:left top;">None</span>
<svg style="left:470.8px;top:90.9px;" width="8" height="5" viewBox="0 0 8 5"><path d="M1 1 L4 4 L7 1" stroke="#b0b0b0" stroke-width="1.1" fill="none"/></svg>
<div style="left:0px;top:100.0px;width:496px;height:12.5px;background:#333333;"></div>
<div style="left:0px;top:111.6px;width:496px;height:0.9px;background:#2c2c2c;"></div>
<div style="left:4px;top:101.2px;width:9.4px;height:9.3px;background:#272727;"></div>
<div style="left:37.2px;top:101.2px;width:9.3px;height:9.3px;background:#272727;"></div>
<svg style="left:54.3px;top:102.4px;" width="5" height="8" viewBox="0 0 5 8"><path d="M1 1.3 L3.7 4 L1 6.7" stroke="#9c9c9c" stroke-width="1.05" fill="none"/></svg>
<div style="left:63.4px;top:101.3px;width:9px;height:9.2px;background:#c8b18a;box-shadow:0 1px 0 #1a1a1a;"></div>
<span style="left:78.40px;top:102.08px;font-size:9px;line-height:9px;color:#c9c9c9;font-weight:bold;transform:scaleX(0.8500);transform-origin:left top;">9</span>
<svg style="left:99.4px;top:100.9px;" width="13" height="11" viewBox="0 0 13 11"><rect x="0.5" y="0.5" width="12" height="10" rx="1" fill="#bfbfbf"/><rect x="2" y="2" width="9" height="7" fill="#6f6f6f"/><circle cx="5" cy="4.6" r="1.7" fill="#d33"/><circle cx="8" cy="4.6" r="1.7" fill="#2b6fd6"/><circle cx="6.4" cy="6.8" r="1.7" fill="#2a9b3a"/></svg>
<span style="left:114.60px;top:102.08px;font-size:9px;line-height:9px;color:#d0d0d0;font-weight:bold;transform:scaleX(0.8560);transform-origin:left top;">Frame Big 1</span>
<div style="left:301.8px;top:101.2px;width:9.6px;height:9.3px;background:#272727;"></div>
<svg style="left:301.6px;top:101.6px;" width="10" height="9" viewBox="0 0 10 9"><path d="M2.2 5.2 Q2.2 1 5 1 Q7.8 1 7.8 5.2 Z" fill="#d4d4d4"/><path d="M0.6 5.9 H9.4" stroke="#d4d4d4" stroke-width="1"/><path d="M3 6 V7.9 M5 6 V8.2 M7 6 V7.9" stroke="#d4d4d4" stroke-width=".95"/><path d="M5 1.6 V5.2" stroke="#2a2a2a" stroke-width=".9"/></svg>
<div style="left:313px;top:101.2px;width:9.3px;height:9.3px;background:#272727;"></div>
<svg style="left:313.2px;top:101.4px;" width="9" height="9" viewBox="0 0 9 9"><circle cx="4.5" cy="4.5" r="1.8" fill="none" stroke="#e0e0e0" stroke-width="1.1"/><path d="M4.5 0.9 V2.1 M4.5 6.9 V8.1 M0.9 4.5 H2.1 M6.9 4.5 H8.1 M2 2 L2.8 2.8 M6.2 6.2 L7 7 M2 7 L2.8 6.2 M6.2 2.8 L7 2" stroke="#e0e0e0" stroke-width=".9"/></svg>
<div style="left:323.7px;top:101.2px;width:9.3px;height:9.3px;background:#272727;"></div>
<div style="left:326px;top:106.0px;width:4px;height:1.2px;background:#d6d6d6;"></div>
<div style="left:356.9px;top:101.2px;width:10px;height:9.3px;background:#272727;"></div>
<div style="left:360px;top:106.0px;width:4px;height:1.2px;background:#d6d6d6;"></div>
<div style="left:368px;top:101.2px;width:9.3px;height:9.3px;background:#272727;"></div>
<div style="left:379px;top:101.2px;width:9.5px;height:9.3px;background:#272727;"></div>
<svg style="left:402.4px;top:100.8px;" width="11" height="11" viewBox="0 0 11 11"><path d="M5.6 5.6 Q4.4 4.8 5 3.8 Q6.4 2.6 7.4 4.2 Q8.2 6.8 5.4 7.6 Q2.4 7.6 2.4 4.6 Q2.8 1.2 6 1.2 Q9.8 1.6 9.8 5.4 Q9.4 9 5.8 9.8" fill="none" stroke="#b4b4b4" stroke-width="1.05"/></svg>
<div style="left:416.5px;top:101.2px;width:64.5px;height:10.2px;background:#1f1f1f;"></div>
<span style="left:421.80px;top:102.08px;font-size:9px;line-height:9px;color:#d0d0d0;transform:scaleX(0.8831);transform-origin:left top;">None</span>
<svg style="left:470.8px;top:103.4px;" width="8" height="5" viewBox="0 0 8 5"><path d="M1 1 L4 4 L7 1" stroke="#b0b0b0" stroke-width="1.1" fill="none"/></svg>
<div style="left:0px;top:112.5px;width:496px;height:12.5px;background:#333333;"></div>
<div style="left:0px;top:124.1px;width:496px;height:0.9px;background:#2c2c2c;"></div>
<div style="left:4px;top:113.7px;width:9.4px;height:9.3px;background:#272727;"></div>
<div style="left:37.2px;top:113.7px;width:9.3px;height:9.3px;background:#272727;"></div>
<svg style="left:54.3px;top:114.9px;" width="5" height="8" viewBox="0 0 5 8"><path d="M1 1.3 L3.7 4 L1 6.7" stroke="#9c9c9c" stroke-width="1.05" fill="none"/></svg>
<div style="left:63.4px;top:113.8px;width:9px;height:9.2px;background:#b5b6dd;box-shadow:0 1px 0 #1a1a1a;"></div>
<span style="left:78.40px;top:114.58px;font-size:9px;line-height:9px;color:#c9c9c9;font-weight:bold;transform:scaleX(0.8500);transform-origin:left top;">10</span>
<svg style="left:101.4px;top:113.3px;" width="8" height="11" viewBox="0 0 8 11"><path d="M0.4 0.4 H5.6 L7.6 2.4 V10.6 H0.4 Z" fill="#3a1204" stroke="#8a4a10" stroke-width=".8"/><path d="M2 6.4 L4 2 L5.6 6.4 Z" fill="#f5a623"/><rect x="2.6" y="7.4" width="2" height="1.6" fill="#d8d8d8"/></svg>
<span style="left:114.60px;top:114.58px;font-size:9px;line-height:9px;color:#d0d0d0;font-weight:bold;transform:scaleX(0.9015);transform-origin:left top;">clouds 02/sky_comp25_pt2.ai</span>
<div style="left:301.8px;top:113.7px;width:9.6px;height:9.3px;background:#272727;"></div>
<svg style="left:301.6px;top:114.1px;" width="10" height="9" viewBox="0 0 10 9"><path d="M2.2 5.2 Q2.2 1 5 1 Q7.8 1 7.8 5.2 Z" fill="#d4d4d4"/><path d="M0.6 5.9 H9.4" stroke="#d4d4d4" stroke-width="1"/><path d="M3 6 V7.9 M5 6 V8.2 M7 6 V7.9" stroke="#d4d4d4" stroke-width=".95"/><path d="M5 1.6 V5.2" stroke="#2a2a2a" stroke-width=".9"/></svg>
<div style="left:313px;top:113.7px;width:9.3px;height:9.3px;background:#272727;"></div>
<div style="left:323.7px;top:113.7px;width:9.3px;height:9.3px;background:#272727;"></div>
<svg style="left:324px;top:113.9px;" width="9" height="9" viewBox="0 0 9 9"><path d="M1 8 L8 1" stroke="#d6d6d6" stroke-width="1.2"/></svg>
<div style="left:356.9px;top:113.7px;width:10px;height:9.3px;background:#272727;"></div>
<div style="left:368px;top:113.7px;width:9.3px;height:9.3px;background:#272727;"></div>
<div style="left:379px;top:113.7px;width:9.5px;height:9.3px;background:#272727;"></div>
<svg style="left:402.4px;top:113.3px;" width="11" height="11" viewBox="0 0 11 11"><path d="M5.6 5.6 Q4.4 4.8 5 3.8 Q6.4 2.6 7.4 4.2 Q8.2 6.8 5.4 7.6 Q2.4 7.6 2.4 4.6 Q2.8 1.2 6 1.2 Q9.8 1.6 9.8 5.4 Q9.4 9 5.8 9.8" fill="none" stroke="#b4b4b4" stroke-width="1.05"/></svg>
<div style="left:416.5px;top:113.7px;width:64.5px;height:10.2px;background:#1f1f1f;"></div>
<span style="left:421.80px;top:114.58px;font-size:9px;line-height:9px;color:#d0d0d0;transform:scaleX(0.8831);transform-origin:left top;">None</span>
<svg style="left:470.8px;top:115.9px;" width="8" height="5" viewBox="0 0 8 5"><path d="M1 1 L4 4 L7 1" stroke="#b0b0b0" stroke-width="1.1" fill="none"/></svg>
<div style="left:0px;top:125.0px;width:496px;height:12.5px;background:#333333;"></div>
<div style="left:0px;top:136.6px;width:496px;height:0.9px;background:#2c2c2c;"></div>
<div style="left:4px;top:126.2px;width:9.4px;height:9.3px;background:#272727;"></div>
<div style="left:37.2px;top:126.2px;width:9.3px;height:9.3px;background:#272727;"></div>
<svg style="left:54.3px;top:127.4px;" width="5" height="8" viewBox="0 0 5 8"><path d="M1 1.3 L3.7 4 L1 6.7" stroke="#9c9c9c" stroke-width="1.05" fill="none"/></svg>
<div style="left:63.4px;top:126.3px;width:9px;height:9.2px;background:#b5b6dd;box-shadow:0 1px 0 #1a1a1a;"></div>
<span style="left:78.40px;top:127.08px;font-size:9px;line-height:9px;color:#c9c9c9;font-weight:bold;transform:scaleX(0.8500);transform-origin:left top;">11</span>
<svg style="left:101.4px;top:125.8px;" width="8" height="11" viewBox="0 0 8 11"><path d="M0.4 0.4 H5.6 L7.6 2.4 V10.6 H0.4 Z" fill="#3a1204" stroke="#8a4a10" stroke-width=".8"/><path d="M2 6.4 L4 2 L5.6 6.4 Z" fill="#f5a623"/><rect x="2.6" y="7.4" width="2" height="1.6" fill="#d8d8d8"/></svg>
<span style="left:114.60px;top:127.08px;font-size:9px;line-height:9px;color:#d0d0d0;font-weight:bold;transform:scaleX(0.9015);transform-origin:left top;">clouds 01/sky_comp25_pt2.ai</span>
<div style="left:301.8px;top:126.2px;width:9.6px;height:9.3px;background:#272727;"></div>
<svg style="left:301.6px;top:126.6px;" width="10" height="9" viewBox="0 0 10 9"><path d="M2.2 5.2 Q2.2 1 5 1 Q7.8 1 7.8 5.2 Z" fill="#d4d4d4"/><path d="M0.6 5.9 H9.4" stroke="#d4d4d4" stroke-width="1"/><path d="M3 6 V7.9 M5 6 V8.2 M7 6 V7.9" stroke="#d4d4d4" stroke-width=".95"/><path d="M5 1.6 V5.2" stroke="#2a2a2a" stroke-width=".9"/></svg>
<div style="left:313px;top:126.2px;width:9.3px;height:9.3px;background:#272727;"></div>
<div style="left:323.7px;top:126.2px;width:9.3px;height:9.3px;background:#272727;"></div>
<svg style="left:324px;top:126.4px;" width="9" height="9" viewBox="0 0 9 9"><path d="M1 8 L8 1" stroke="#d6d6d6" stroke-width="1.2"/></svg>
<div style="left:356.9px;top:126.2px;width:10px;height:9.3px;background:#272727;"></div>
<div style="left:368px;top:126.2px;width:9.3px;height:9.3px;background:#272727;"></div>
<div style="left:379px;top:126.2px;width:9.5px;height:9.3px;background:#272727;"></div>
<svg style="left:402.4px;top:125.8px;" width="11" height="11" viewBox="0 0 11 11"><path d="M5.6 5.6 Q4.4 4.8 5 3.8 Q6.4 2.6 7.4 4.2 Q8.2 6.8 5.4 7.6 Q2.4 7.6 2.4 4.6 Q2.8 1.2 6 1.2 Q9.8 1.6 9.8 5.4 Q9.4 9 5.8 9.8" fill="none" stroke="#b4b4b4" stroke-width="1.05"/></svg>
<div style="left:416.5px;top:126.2px;width:64.5px;height:10.2px;background:#1f1f1f;"></div>
<span style="left:421.80px;top:127.08px;font-size:9px;line-height:9px;color:#d0d0d0;transform:scaleX(0.8831);transform-origin:left top;">None</span>
<svg style="left:470.8px;top:128.4px;" width="8" height="5" viewBox="0 0 8 5"><path d="M1 1 L4 4 L7 1" stroke="#b0b0b0" stroke-width="1.1" fill="none"/></svg>
<div style="left:0px;top:137.5px;width:496px;height:12.5px;background:#333333;"></div>
<div style="left:0px;top:149.1px;width:496px;height:0.9px;background:#2c2c2c;"></div>
<div style="left:4px;top:138.7px;width:9.4px;height:9.3px;background:#272727;"></div>
<div style="left:37.2px;top:138.7px;width:9.3px;height:9.3px;background:#272727;"></div>
<svg style="left:54.3px;top:139.9px;" width="5" height="8" viewBox="0 0 5 8"><path d="M1 1.3 L3.7 4 L1 6.7" stroke="#9c9c9c" stroke-width="1.05" fill="none"/></svg>
<div style="left:63.4px;top:138.8px;width:9px;height:9.2px;background:#b5b6dd;box-shadow:0 1px 0 #1a1a1a;"></div>
<span style="left:78.40px;top:139.58px;font-size:9px;line-height:9px;color:#c9c9c9;font-weight:bold;transform:scaleX(0.8500);transform-origin:left top;">12</span>
<svg style="left:101.4px;top:138.3px;" width="8" height="11" viewBox="0 0 8 11"><path d="M0.4 0.4 H5.6 L7.6 2.4 V10.6 H0.4 Z" fill="#3a1204" stroke="#8a4a10" stroke-width=".8"/><path d="M2 6.4 L4 2 L5.6 6.4 Z" fill="#f5a623"/><rect x="2.6" y="7.4" width="2" height="1.6" fill="#d8d8d8"/></svg>
<span style="left:114.60px;top:139.58px;font-size:9px;line-height:9px;color:#d0d0d0;font-weight:bold;transform:scaleX(0.8966);transform-origin:left top;">clouds base/sky_comp25_pt2.ai</span>
<div style="left:301.8px;top:138.7px;width:9.6px;height:9.3px;background:#272727;"></div>
<svg style="left:301.6px;top:139.1px;" width="10" height="9" viewBox="0 0 10 9"><path d="M2.2 5.2 Q2.2 1 5 1 Q7.8 1 7.8 5.2 Z" fill="#d4d4d4"/><path d="M0.6 5.9 H9.4" stroke="#d4d4d4" stroke-width="1"/><path d="M3 6 V7.9 M5 6 V8.2 M7 6 V7.9" stroke="#d4d4d4" stroke-width=".95"/><path d="M5 1.6 V5.2" stroke="#2a2a2a" stroke-width=".9"/></svg>
<div style="left:313px;top:138.7px;width:9.3px;height:9.3px;background:#272727;"></div>
<div style="left:323.7px;top:138.7px;width:9.3px;height:9.3px;background:#272727;"></div>
<svg style="left:324px;top:138.9px;" width="9" height="9" viewBox="0 0 9 9"><path d="M1 8 L8 1" stroke="#d6d6d6" stroke-width="1.2"/></svg>
<div style="left:356.9px;top:138.7px;width:10px;height:9.3px;background:#272727;"></div>
<div style="left:368px;top:138.7px;width:9.3px;height:9.3px;background:#272727;"></div>
<div style="left:379px;top:138.7px;width:9.5px;height:9.3px;background:#272727;"></div>
<svg style="left:402.4px;top:138.3px;" width="11" height="11" viewBox="0 0 11 11"><path d="M5.6 5.6 Q4.4 4.8 5 3.8 Q6.4 2.6 7.4 4.2 Q8.2 6.8 5.4 7.6 Q2.4 7.6 2.4 4.6 Q2.8 1.2 6 1.2 Q9.8 1.6 9.8 5.4 Q9.4 9 5.8 9.8" fill="none" stroke="#b4b4b4" stroke-width="1.05"/></svg>
<div style="left:416.5px;top:138.7px;width:64.5px;height:10.2px;background:#1f1f1f;"></div>
<span style="left:421.80px;top:139.58px;font-size:9px;line-height:9px;color:#d0d0d0;transform:scaleX(0.8831);transform-origin:left top;">None</span>
<svg style="left:470.8px;top:140.9px;" width="8" height="5" viewBox="0 0 8 5"><path d="M1 1 L4 4 L7 1" stroke="#b0b0b0" stroke-width="1.1" fill="none"/></svg>
</div>
<div style="left:15px;top:705.5px;width:1250px;height:12.5px;background:#232323;"></div>
<div style="left:15px;top:705px;width:497px;height:0.8px;background:#181818;"></div>
<div style="left:17.5px;top:706.5px;width:13px;height:11px;background:#181818;border-radius:2px;"></div>
<svg style="left:19px;top:707.5px;" width="11" height="10" viewBox="0 0 11 10"><g fill="none" stroke="#2d8ceb" stroke-width="1.1"><ellipse cx="3.6" cy="3" rx="2.6" ry="2"/><ellipse cx="7" cy="7" rx="3" ry="2.2"/><path d="M1.4 4 L4.4 8.4 M5.8 2 L9.6 6"/></g></svg>
<svg style="left:33.5px;top:707.5px;" width="11" height="10" viewBox="0 0 11 10"><circle cx="4" cy="4" r="3" fill="none" stroke="#d0d0d0" stroke-width="1"/><rect x="4.4" y="4.4" width="5.4" height="5" rx="1" fill="none" stroke="#d0d0d0" stroke-width="1"/></svg>
<span style="left:48.00px;top:708.78px;font-size:9px;line-height:9px;color:#d0d0d0;font-weight:bold;transform:scaleX(0.9000);transform-origin:left top;">{}</span>
<svg style="left:62px;top:707.5px;" width="12" height="10" viewBox="0 0 12 10"><circle cx="4.4" cy="3.6" r="2.8" fill="#bdbdbd"/><path d="M0.6 9 Q4.4 4.4 8.4 9 Z" fill="#bdbdbd"/><path d="M8 2 L10.6 4 L8 6" stroke="#bdbdbd" stroke-width="1" fill="none"/></svg>
<span style="left:93.00px;top:707.78px;font-size:9px;line-height:9px;color:#b0b0b0;transform:scaleX(0.8967);transform-origin:left top;">Frame Render Time:</span>
<span style="left:171.00px;top:707.78px;font-size:9px;line-height:9px;color:#3cc48a;transform:scaleX(0.8822);transform-origin:left top;">4ms</span>
<div style="left:315.5px;top:706.5px;width:98px;height:11px;background:#1e1e1e;border-radius:1px;box-shadow:0 0 0 1px #303030;"></div>
<span style="left:319.30px;top:707.78px;font-size:9px;line-height:9px;color:#b0b0b0;transform:scaleX(0.9041);transform-origin:left top;">Toggle Switches / Modes</span>
<div style="left:511px;top:543px;width:1.2px;height:163px;background:#141414;"></div>
<div style="left:512.5px;top:520.5px;width:739px;height:8.5px;background:#1a1a1a;"></div>
<div style="left:517px;top:522px;width:729px;height:5.5px;background:#6c6c6c;border-top:1px solid #8a8a8a;box-sizing:border-box;"></div>
<div style="left:512.5px;top:521.6px;width:4.5px;height:6.4px;background:#2d9bf5;border-radius:4px 0 0 4px"></div>
<div style="left:1246px;top:521.6px;width:5px;height:6.4px;background:#2d9bf5;border-radius:0 4px 4px 0"></div>
<div style="left:512.5px;top:528.8px;width:739px;height:14.2px;background:#232323;overflow:hidden">
<span style="left:-4.95px;top:1.38px;font-size:9px;line-height:9px;color:#b4b4b4;transform:scaleX(0.9742);transform-origin:left top">0:00f</span>
<div style="left:4.3px;top:9.0px;width:1px;height:4.6px;background:#9c9c9c;"></div>
<span style="left:29.76px;top:1.38px;font-size:9px;line-height:9px;color:#b4b4b4;transform:scaleX(0.9192);transform-origin:left top">00:15f</span>
<div style="left:40.76px;top:10.0px;width:1px;height:3.6px;background:#9c9c9c;"></div>
<span style="left:66.23px;top:1.38px;font-size:9px;line-height:9px;color:#b4b4b4;transform:scaleX(0.9192);transform-origin:left top">01:00f</span>
<div style="left:77.23px;top:9.0px;width:1px;height:4.6px;background:#9c9c9c;"></div>
<span style="left:102.69px;top:1.38px;font-size:9px;line-height:9px;color:#b4b4b4;transform:scaleX(0.9192);transform-origin:left top">01:15f</span>
<div style="left:113.69px;top:10.0px;width:1px;height:3.6px;background:#9c9c9c;"></div>
<span style="left:139.16px;top:1.38px;font-size:9px;line-height:9px;color:#b4b4b4;transform:scaleX(0.9192);transform-origin:left top">02:00f</span>
<div style="left:150.16px;top:9.0px;width:1px;height:4.6px;background:#9c9c9c;"></div>
<span style="left:175.62px;top:1.38px;font-size:9px;line-height:9px;color:#b4b4b4;transform:scaleX(0.9192);transform-origin:left top">02:15f</span>
<div style="left:186.62px;top:10.0px;width:1px;height:3.6px;background:#9c9c9c;"></div>
<span style="left:212.09px;top:1.38px;font-size:9px;line-height:9px;color:#b4b4b4;transform:scaleX(0.9192);transform-origin:left top">03:00f</span>
<div style="left:223.09px;top:9.0px;width:1px;height:4.6px;background:#9c9c9c;"></div>
<span style="left:248.55px;top:1.38px;font-size:9px;line-height:9px;color:#b4b4b4;transform:scaleX(0.9192);transform-origin:left top">03:15f</span>
<div style="left:259.55px;top:10.0px;width:1px;height:3.6px;background:#9c9c9c;"></div>
<span style="left:285.02px;top:1.38px;font-size:9px;line-height:9px;color:#b4b4b4;transform:scaleX(0.9192);transform-origin:left top">04:00f</span>
<div style="left:296.02px;top:9.0px;width:1px;height:4.6px;background:#9c9c9c;"></div>
<span style="left:321.49px;top:1.38px;font-size:9px;line-height:9px;color:#b4b4b4;transform:scaleX(0.9192);transform-origin:left top">04:15f</span>
<div style="left:332.49px;top:10.0px;width:1px;height:3.6px;background:#9c9c9c;"></div>
<span style="left:357.95px;top:1.38px;font-size:9px;line-height:9px;color:#b4b4b4;transform:scaleX(0.9192);transform-origin:left top">05:00f</span>
<div style="left:368.95px;top:9.0px;width:1px;height:4.6px;background:#9c9c9c;"></div>
<span style="left:394.41px;top:1.38px;font-size:9px;line-height:9px;color:#b4b4b4;transform:scaleX(0.9192);transform-origin:left top">05:15f</span>
<div style="left:405.41px;top:10.0px;width:1px;height:3.6px;background:#9c9c9c;"></div>
<span style="left:430.88px;top:1.38px;font-size:9px;line-height:9px;color:#b4b4b4;transform:scaleX(0.9192);transform-origin:left top">06:00f</span>
<div style="left:441.88px;top:9.0px;width:1px;height:4.6px;background:#9c9c9c;"></div>
<span style="left:467.35px;top:1.38px;font-size:9px;line-height:9px;color:#b4b4b4;transform:scaleX(0.9192);transform-origin:left top">06:15f</span>
<div style="left:478.35px;top:10.0px;width:1px;height:3.6px;background:#9c9c9c;"></div>
<span style="left:503.81px;top:1.38px;font-size:9px;line-height:9px;color:#b4b4b4;transform:scaleX(0.9192);transform-origin:left top">07:00f</span>
<div style="left:514.81px;top:9.0px;width:1px;height:4.6px;background:#9c9c9c;"></div>
<span style="left:540.28px;top:1.38px;font-size:9px;line-height:9px;color:#b4b4b4;transform:scaleX(0.9192);transform-origin:left top">07:15f</span>
<div style="left:551.28px;top:10.0px;width:1px;height:3.6px;background:#9c9c9c;"></div>
<span style="left:576.74px;top:1.38px;font-size:9px;line-height:9px;color:#b4b4b4;transform:scaleX(0.9192);transform-origin:left top">08:00f</span>
<div style="left:587.74px;top:9.0px;width:1px;height:4.6px;background:#9c9c9c;"></div>
<span style="left:613.20px;top:1.38px;font-size:9px;line-height:9px;color:#b4b4b4;transform:scaleX(0.9192);transform-origin:left top">08:15f</span>
<div style="left:624.2px;top:10.0px;width:1px;height:3.6px;background:#9c9c9c;"></div>
<span style="left:649.67px;top:1.38px;font-size:9px;line-height:9px;color:#b4b4b4;transform:scaleX(0.9192);transform-origin:left top">09:00f</span>
<div style="left:660.67px;top:9.0px;width:1px;height:4.6px;background:#9c9c9c;"></div>
<span style="left:686.13px;top:1.38px;font-size:9px;line-height:9px;color:#b4b4b4;transform:scaleX(0.9192);transform-origin:left top">09:15f</span>
<div style="left:697.13px;top:10.0px;width:1px;height:3.6px;background:#9c9c9c;"></div>
<span style="left:722.60px;top:1.38px;font-size:9px;line-height:9px;color:#b4b4b4;transform:scaleX(0.9192);transform-origin:left top">10:00f</span>
<div style="left:733.6px;top:9.0px;width:1px;height:4.6px;background:#9c9c9c;"></div>
</div>
<div style="left:512.5px;top:543px;width:752px;height:0.6px;background:#161616;"></div>
<div style="left:512.5px;top:543.5px;width:739px;height:14px;background:#1b1b1b;"></div>
<div style="left:517px;top:543.5px;width:729px;height:10.4px;background:#5f5f5f;"></div>
<div style="left:512.6px;top:543.4px;width:4.4px;height:10.6px;background:#2d9bf5;border-radius:3px 0 0 3px"></div>
<div style="left:1246px;top:543.4px;width:5px;height:10.6px;background:#2d9bf5;border-radius:0 3px 3px 0"></div>
<div style="left:517px;top:555px;width:729px;height:2.2px;background:#04df04;"></div>
<div style="left:512.5px;top:557.5px;width:739px;height:148px;overflow:hidden">
<div style="left:0px;top:0.0px;width:739px;height:12.5px;background:#333333;"></div>
<div style="left:4.5px;top:0.0px;width:729.2px;height:12.5px;background:#3d3d3d;"></div>
<div style="left:162.20000000000005px;top:0.4px;width:134.0px;height:11.4px;background:#803b3b;"></div>
<div style="left:0px;top:11.4px;width:739px;height:1.2px;background:#2f2f2f;"></div>
<div style="left:0px;top:12.5px;width:739px;height:12.5px;background:#333333;"></div>
<div style="left:4.5px;top:12.5px;width:729.2px;height:12.5px;background:#3d3d3d;"></div>
<div style="left:65.20000000000005px;top:12.9px;width:97.0px;height:11.4px;background:#803b3b;"></div>
<div style="left:0px;top:23.9px;width:739px;height:1.2px;background:#2f2f2f;"></div>
<div style="left:0px;top:25.0px;width:739px;height:12.5px;background:#333333;"></div>
<div style="left:4.5px;top:25.0px;width:729.2px;height:12.5px;background:#3d3d3d;"></div>
<div style="left:4.5px;top:25.4px;width:291.70000000000005px;height:11.4px;background:#803b3b;"></div>
<div style="left:0px;top:36.4px;width:739px;height:1.2px;background:#2f2f2f;"></div>
<div style="left:0px;top:37.5px;width:739px;height:12.5px;background:#333333;"></div>
<div style="left:4.5px;top:37.5px;width:729.2px;height:12.5px;background:#3d3d3d;"></div>
<div style="left:271.20000000000005px;top:37.9px;width:468.29999999999995px;height:11.4px;background:#803b3b;"></div>
<div style="left:733.7px;top:37.9px;width:5.7999999999999545px;height:11.4px;background:rgba(255,255,255,.03);"></div>
<div style="left:0px;top:48.9px;width:739px;height:1.2px;background:#2f2f2f;"></div>
<div style="left:0px;top:50.0px;width:739px;height:12.5px;background:#333333;"></div>
<div style="left:4.5px;top:50.0px;width:729.2px;height:12.5px;background:#3d3d3d;"></div>
<div style="left:320.29999999999995px;top:50.4px;width:148.20000000000005px;height:11.4px;background:#55628f;"></div>
<div style="left:0px;top:61.4px;width:739px;height:1.2px;background:#2f2f2f;"></div>
<div style="left:0px;top:62.5px;width:739px;height:12.5px;background:#333333;"></div>
<div style="left:4.5px;top:62.5px;width:729.2px;height:12.5px;background:#3d3d3d;"></div>
<div style="left:320.29999999999995px;top:62.9px;width:148.20000000000005px;height:11.4px;background:#55628f;"></div>
<div style="left:0px;top:73.9px;width:739px;height:1.2px;background:#2f2f2f;"></div>
<div style="left:0px;top:75.0px;width:739px;height:12.5px;background:#333333;"></div>
<div style="left:4.5px;top:75.0px;width:729.2px;height:12.5px;background:#3d3d3d;"></div>
<div style="left:320.29999999999995px;top:75.4px;width:419.20000000000005px;height:11.4px;background:#6f6656;"></div>
<div style="left:733.7px;top:75.4px;width:5.7999999999999545px;height:11.4px;background:rgba(255,255,255,.03);"></div>
<div style="left:0px;top:86.4px;width:739px;height:1.2px;background:#2f2f2f;"></div>
<div style="left:0px;top:87.5px;width:739px;height:12.5px;background:#333333;"></div>
<div style="left:4.5px;top:87.5px;width:729.2px;height:12.5px;background:#3d3d3d;"></div>
<div style="left:320.29999999999995px;top:87.9px;width:419.20000000000005px;height:11.4px;background:#6f6656;"></div>
<div style="left:733.7px;top:87.9px;width:5.7999999999999545px;height:11.4px;background:rgba(255,255,255,.03);"></div>
<div style="left:0px;top:98.9px;width:739px;height:1.2px;background:#2f2f2f;"></div>
<div style="left:0px;top:100.0px;width:739px;height:12.5px;background:#333333;"></div>
<div style="left:4.5px;top:100.0px;width:729.2px;height:12.5px;background:#3d3d3d;"></div>
<div style="left:28.700000000000045px;top:100.4px;width:705.0px;height:11.4px;background:#6f6656;"></div>
<div style="left:0px;top:111.4px;width:739px;height:1.2px;background:#2f2f2f;"></div>
<div style="left:0px;top:112.5px;width:739px;height:12.5px;background:#333333;"></div>
<div style="left:4.5px;top:112.5px;width:729.2px;height:12.5px;background:#3d3d3d;"></div>
<div style="left:271.20000000000005px;top:112.9px;width:468.29999999999995px;height:11.4px;background:#787889;"></div>
<div style="left:733.7px;top:112.9px;width:5.7999999999999545px;height:11.4px;background:rgba(255,255,255,.03);"></div>
<div style="left:0px;top:123.9px;width:739px;height:1.2px;background:#2f2f2f;"></div>
<div style="left:0px;top:125.0px;width:739px;height:12.5px;background:#333333;"></div>
<div style="left:4.5px;top:125.0px;width:729.2px;height:12.5px;background:#3d3d3d;"></div>
<div style="left:271.20000000000005px;top:125.4px;width:468.29999999999995px;height:11.4px;background:#787889;"></div>
<div style="left:733.7px;top:125.4px;width:5.7999999999999545px;height:11.4px;background:rgba(255,255,255,.03);"></div>
<div style="left:0px;top:136.4px;width:739px;height:1.2px;background:#2f2f2f;"></div>
<div style="left:0px;top:137.5px;width:739px;height:12.5px;background:#333333;"></div>
<div style="left:4.5px;top:137.5px;width:729.2px;height:12.5px;background:#3d3d3d;"></div>
<div style="left:271.20000000000005px;top:137.9px;width:468.29999999999995px;height:11.4px;background:#787889;"></div>
<div style="left:733.7px;top:137.9px;width:5.7999999999999545px;height:11.4px;background:rgba(255,255,255,.03);"></div>
<div style="left:0px;top:148.9px;width:739px;height:1.2px;background:#2f2f2f;"></div>
<div style="left:188.1px;top:1.6px;width:27.4px;height:8.4px;background:#dba9a9;border-radius:1px;box-shadow:0 0 0 .6px rgba(40,20,20,.55)"></div>
<svg style="left:183.79999999999995px;top:5.6px;" width="8" height="6.4" viewBox="0 0 8 6.4"><path d="M0.3 6.2 V4.2 L2.8 0.6 H5.2 L7.7 4.2 V6.2 Z" fill="#e2e2e2" stroke="rgba(30,30,30,.5)" stroke-width=".5"/></svg>
<span style="left:192.3px;top:1.40px;font-size:8.5px;line-height:8.5px;color:#4a2c2c;transform:scaleX(0.8180);transform-origin:left top">TR In</span>
<div style="left:90.5px;top:14.1px;width:28.0px;height:8.4px;background:#dba9a9;border-radius:1px;box-shadow:0 0 0 .6px rgba(40,20,20,.55)"></div>
<svg style="left:86.10000000000002px;top:18.1px;" width="8" height="6.4" viewBox="0 0 8 6.4"><path d="M0.3 6.2 V4.2 L2.8 0.6 H5.2 L7.7 4.2 V6.2 Z" fill="#e2e2e2" stroke="rgba(30,30,30,.5)" stroke-width=".5"/></svg>
<span style="left:94.7px;top:13.90px;font-size:8.5px;line-height:8.5px;color:#4a2c2c;transform:scaleX(0.8180);transform-origin:left top">TR In</span>
<div style="left:139.0px;top:14.1px;width:33.5px;height:8.4px;background:#dba9a9;border-radius:1px;box-shadow:0 0 0 .6px rgba(40,20,20,.55)"></div>
<div style="left:162.5px;top:14.1px;width:10px;height:8.4px;background:#a9a9a9;"></div>
<svg style="left:134.79999999999995px;top:18.1px;" width="8" height="6.4" viewBox="0 0 8 6.4"><path d="M0.3 6.2 V4.2 L2.8 0.6 H5.2 L7.7 4.2 V6.2 Z" fill="#e2e2e2" stroke="rgba(30,30,30,.5)" stroke-width=".5"/></svg>
<span style="left:143.2px;top:13.90px;font-size:8.5px;line-height:8.5px;color:#4a2c2c;transform:scaleX(0.8396);transform-origin:left top">TR Out</span>
<div style="left:332.8px;top:39.1px;width:27.1px;height:8.4px;background:#dba9a9;border-radius:1px;box-shadow:0 0 0 .6px rgba(40,20,20,.55)"></div>
<svg style="left:326.70000000000005px;top:43.1px;" width="8" height="6.4" viewBox="0 0 8 6.4"><path d="M0.3 6.2 V4.2 L2.8 0.6 H5.2 L7.7 4.2 V6.2 Z" fill="#e2e2e2" stroke="rgba(30,30,30,.5)" stroke-width=".5"/></svg>
<span style="left:337.0px;top:38.90px;font-size:8.5px;line-height:8.5px;color:#4a2c2c;transform:scaleX(0.8180);transform-origin:left top">TR In</span>
<div style="left:78.5px;top:101.6px;width:17.8px;height:8.4px;background:#6f88f2;border-radius:1px;box-shadow:0 0 0 .6px rgba(40,20,20,.55)"></div>
<svg style="left:73.5px;top:105.6px;" width="8" height="6.4" viewBox="0 0 8 6.4"><path d="M0.3 6.2 V4.2 L2.8 0.6 H5.2 L7.7 4.2 V6.2 Z" fill="#6f88f2" stroke="rgba(30,30,30,.5)" stroke-width=".5"/></svg>
<span style="left:82.7px;top:101.40px;font-size:8.5px;line-height:8.5px;color:#1c2a66;transform:scaleX(0.9412);transform-origin:left top">IN</span>
<div style="left:658.8px;top:101.6px;width:25.7px;height:8.4px;background:#6f88f2;border-radius:1px;box-shadow:0 0 0 .6px rgba(40,20,20,.55)"></div>
<svg style="left:654.8px;top:105.6px;" width="8" height="6.4" viewBox="0 0 8 6.4"><path d="M0.3 6.2 V4.2 L2.8 0.6 H5.2 L7.7 4.2 V6.2 Z" fill="#6f88f2" stroke="rgba(30,30,30,.5)" stroke-width=".5"/></svg>
<span style="left:663.0px;top:101.40px;font-size:8.5px;line-height:8.5px;color:#1c2a66;transform:scaleX(0.8360);transform-origin:left top">OUT</span>
</div>
<div style="left:704px;top:522.5px;width:1.4px;height:35px;background:#2d8de6;"></div>
<div style="left:704px;top:557.5px;width:1.4px;height:148px;background:#3a85cf;"></div>
<svg style="left:699.5px;top:531.8px;" width="10" height="10.4" viewBox="0 0 10 10.4"><path d="M0.5 0.5 H9.5 V5 L5.3 10 H4.7 L0.5 5 Z" fill="#2d9bf5"/><path d="M3.6 4.6 L5 8 L6.4 4.6" fill="none" stroke="#184f86" stroke-width=".9"/></svg>
<div style="left:1251.5px;top:520px;width:13.5px;height:23px;background:#232323;"></div>
<div style="left:1251.5px;top:543.5px;width:13.5px;height:162px;background:#1f1f1f;"></div>
<svg style="left:1253px;top:545px;" width="11" height="11" viewBox="0 0 11 11"><path d="M1 0.6 H9.4 V6.4 L5.2 10.4 L1 6.4 Z" fill="#b9b9b9"/></svg>
<svg style="left:1252.5px;top:559.5px;" width="12" height="10" viewBox="0 0 12 10"><path d="M4.6 0.8 H10.6 V5 H8.4 L6.6 8.8 H3.6 L0.8 4.8 Z" fill="none" stroke="#e0e0e0" stroke-width="1.1"/><rect x="7" y="2" width="3" height="2.4" fill="#e0e0e0"/></svg>
<div style="left:1253.5px;top:572px;width:9.5px;height:81px;background:#333333;border-radius:5px"></div>
<div style="left:1251.5px;top:705.5px;width:13.5px;height:12.5px;background:#2a2a2a;"></div>
<svg style="left:515.5px;top:709.5px;" width="8" height="5" viewBox="0 0 8 5"><path d="M0.4 4.6 L3 1.4 L4.2 2.8 L5 2 L7.6 4.6 Z" fill="#d0d0d0"/></svg>
<div style="left:534px;top:712.2px;width:32px;height:1px;background:#4a4a4a;"></div>
<div style="left:531px;top:709px;width:5px;height:5px;border:1.3px solid #d0d0d0;border-radius:50%;background:#232323"></div>
<svg style="left:574.5px;top:707.5px;" width="13" height="7" viewBox="0 0 13 7"><path d="M0.4 6.6 L4.4 1.6 L6 3.6 L8 0.6 L12.6 6.6 Z" fill="#d0d0d0"/></svg>
<div style="left:0px;top:0px;width:14px;height:720px;background:#000;"></div>
<div style="left:1266px;top:0px;width:14px;height:720px;background:#000;"></div>
<div style="left:14px;top:0px;width:1px;height:720px;background:#515151;"></div>
<div style="left:15px;top:0px;width:0.8px;height:718px;background:#191919;"></div>
<div style="left:1265px;top:0px;width:1px;height:720px;background:#515151;"></div>
<div style="left:1264.2px;top:0px;width:0.8px;height:718px;background:#191919;"></div>
<div style="left:14px;top:718px;width:1252px;height:2px;background:#4b4b4b;"></div></body></html>
